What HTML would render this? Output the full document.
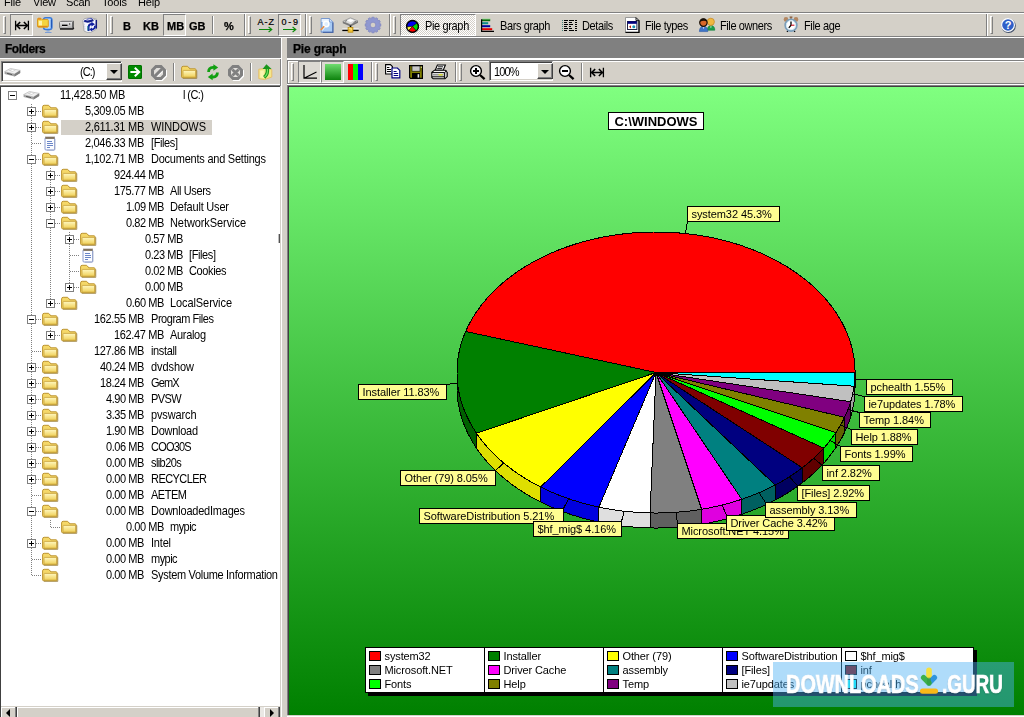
<!DOCTYPE html><html><head><meta charset="utf-8"><title>TreeSize</title><style>
html,body{margin:0;padding:0}
body{width:1024px;height:717px;overflow:hidden;background:#d4d0c8;position:relative;font-family:"Liberation Sans",sans-serif;font-size:11px;color:#000}
body>div,body>span,body>svg{position:absolute}
.t{line-height:13px;white-space:pre;font-size:11px;will-change:transform}
.b{font-weight:bold;-webkit-text-stroke:.25px #000}
.ty{transform:scaleY(1.12);transform-origin:0 10.3px}
.m{letter-spacing:-.2px}
.ic{display:block;overflow:visible}
.grip{width:3px;box-sizing:border-box;border-left:1px solid #fff;border-top:1px solid #fff;border-right:1px solid #808080;border-bottom:1px solid #808080}
.down{border:1px solid;border-color:#808080 #fff #fff #808080;background:repeating-conic-gradient(#fff 0% 25%,#d4d0c8 0% 50%) 0 0/2px 2px}
.flat{background:#dcd9d2}
.sunk{border:1px solid;border-color:#808080 #fff #fff #808080;box-shadow:inset 1px 1px 0 #404040,inset -1px -1px 0 #d4d0c8}
.btn{background:#d4d0c8;border:1px solid;border-color:#fff #404040 #404040 #fff;box-shadow:inset -1px -1px 0 #808080}
.arr{width:0;height:0;border:4px solid transparent;border-top:4px solid #000;border-bottom:0}
.arl{width:0;height:0;border:4px solid transparent;border-right:4px solid #000;border-left:0}
.arr2{width:0;height:0;border:4px solid transparent;border-left:4px solid #000;border-right:0}
.vd{width:1px;background:repeating-linear-gradient(#808080 0 1px,transparent 1px 2px)}
.hd{height:1px;background:repeating-linear-gradient(90deg,#808080 0 1px,transparent 1px 2px)}
.ex{width:7px;height:7px;border:1px solid #808080;background:#fff}
.ex i{position:absolute;left:1px;top:3px;width:5px;height:1px;background:#000}
.ex b{position:absolute;left:3px;top:1px;width:1px;height:5px;background:#000}
.wm{will-change:transform;font-weight:bold;font-size:25.5px;line-height:28px;color:#fff;-webkit-text-stroke:.7px #fff;transform-origin:0 0;transform:scaleX(.78);white-space:pre;text-shadow:0 1px 2px rgba(0,0,0,.25)}
</style></head><body>
<span class="t m" style="left:4px;top:-4px;">File</span>
<span class="t m" style="left:33px;top:-4px;">View</span>
<span class="t m" style="left:66px;top:-4px;">Scan</span>
<span class="t m" style="left:102px;top:-4px;">Tools</span>
<span class="t m" style="left:138px;top:-4px;">Help</span>
<div style="left:0px;top:12px;width:1024px;height:1px;background:#808080;"></div>
<div style="left:0px;top:13px;width:1024px;height:1px;background:#fff;"></div>
<div style="left:0px;top:36px;width:1024px;height:1px;background:#808080;"></div>
<div style="left:0px;top:37px;width:1024px;height:1px;background:#fff;"></div>
<div style="left:106px;top:14px;width:1px;height:22px;background:#808080;"></div>
<div style="left:107px;top:14px;width:1px;height:22px;background:#fff;"></div>
<div style="left:244px;top:14px;width:1px;height:22px;background:#808080;"></div>
<div style="left:245px;top:14px;width:1px;height:22px;background:#fff;"></div>
<div style="left:305px;top:14px;width:1px;height:22px;background:#808080;"></div>
<div style="left:306px;top:14px;width:1px;height:22px;background:#fff;"></div>
<div style="left:389px;top:14px;width:1px;height:22px;background:#808080;"></div>
<div style="left:390px;top:14px;width:1px;height:22px;background:#fff;"></div>
<div style="left:986px;top:14px;width:1px;height:22px;background:#808080;"></div>
<div style="left:987px;top:14px;width:1px;height:22px;background:#fff;"></div>
<div class="grip" style="left:3px;top:16px;height:18px"></div>
<div class="grip" style="left:110px;top:16px;height:18px"></div>
<div class="grip" style="left:248px;top:16px;height:18px"></div>
<div class="grip" style="left:309px;top:16px;height:18px"></div>
<div class="grip" style="left:393px;top:16px;height:18px"></div>
<div class="grip" style="left:990px;top:16px;height:18px"></div>
<div class="down flat" style="left:10px;top:14px;width:21px;height:20px"></div>
<svg class="ic" style="left:15px;top:21px" width="15" height="10" viewBox="0 0 15 10"><g stroke="#000" stroke-width="1.3" fill="none" stroke-linecap="square"><path d="M0.6,0.5V8.5M13.4,0.5V8.5M1.5,4.5H12.5"/><path d="M4.6,1.6L1.7,4.5L4.6,7.4M9.4,1.6L12.3,4.5L9.4,7.4" stroke-width="1.5"/></g></svg>
<svg class="ic" style="left:37px;top:17px" width="16" height="17" viewBox="0 0 16 17"><rect x="6.500" y="0.800" width="8.400" height="11.600" rx="2.200" fill="#b4d8ff" stroke="#3a7ada" stroke-width="1.500"/><path d="M14.300,2.400v8.400" stroke="#1c50b0" stroke-width="1.100"/><path d="M9.500,13.200h3v1.300h-3z" fill="#6a9ae0" opacity=".8"/><path d="M8,15h6.500v1h-6.500z" fill="#5a8ad8" opacity=".7"/><path d="M0.500,2.200q0-1,1-1h2.200l1,1.200h5.600q1,0 1,1v5.800q0,1-1,1h-8.800q-1,0-1-1z" fill="#f4d440" stroke="#dc9a1c" stroke-width="1"/><path d="M1,1.400h3v1.200h-3z" fill="#ea7a18"/><path d="M1,9.400h9.500" stroke="#e08a18" stroke-width="1.200"/><path d="M1.800,3.800h3.200v4.600h-3.200z" fill="#fff8c0" opacity=".85"/></svg>
<svg class="ic" style="left:59px;top:20px" width="16" height="11" viewBox="0 0 16 11"><defs><linearGradient id="dg" x1="0" y1="0" x2="0" y2="1"><stop offset="0" stop-color="#ececec"/><stop offset=".45" stop-color="#cfcfcf"/><stop offset="1" stop-color="#a8a8a8"/></linearGradient></defs><path d="M1.500,1.800L2.800,0.600h11.400l-1,1.200z" fill="#b0b0b0"/><rect x="0.500" y="1.500" width="13" height="7" rx="1" fill="url(#dg)" stroke="#808080"/><path d="M13.600,1.800l1.200-1.200v6.600l-1.200,1.400z" fill="#484848"/><path d="M1,9h12.800l1-1.200" stroke="#181818" stroke-width="1.400" fill="none"/><path d="M3,5.400h5.500" stroke="#000" stroke-width="1.500"/><path d="M3,6.500h5.500" stroke="#f0f0f0" stroke-width=".7"/><rect x="10" y="3.400" width="1.200" height="1.200" fill="#303030"/></svg>
<svg class="ic" style="left:82px;top:17px" width="16" height="16" viewBox="0 0 16 16"><path d="M0.800,3.600L2,14q2.800,2 6.600,1.400l5.200-2.800L14.600,2.400L9,0.600L2.400,1.600z" fill="#f6f7ff" stroke="#a4a4a4" stroke-width=".9"/><path d="M2.200,3.600q3.400,2.200 9.200-.6" stroke="#14208c" stroke-width="2.200" fill="none"/><path d="M4.600,2.400q2.400-.9 5.600-.9" stroke="#5058b8" stroke-width="1" fill="none"/><path d="M11.600,2.800L14.400,1.800" stroke="#b4b4b4" stroke-width="1"/><path d="M14.300,3V11.600" stroke="#10187c" stroke-width="1.500"/><path d="M2,5.400l1,8.200" stroke="#c4c8d4" stroke-width="1.400" stroke-dasharray="1 1"/><path d="M6.600,14V9.800q.2-2.800 3.400-2.800" stroke="#1020a0" stroke-width="1.900" fill="none"/><path d="M9.400,4.800l3.600,2.400l-3.600,2.200z" fill="#1020a0"/><path d="M13,8.600q.2,3.600-3.600,4" stroke="#1020a0" stroke-width="1.800" fill="none"/><path d="M10,10.400l-2.800,2.200l3,2z" fill="#1020a0"/><path d="M5.800,9v4.600" stroke="#289090" stroke-width=".9"/></svg>
<span class="t b" style="left:123px;top:19.6px;">B</span>
<span class="t b" style="left:142.5px;top:19.6px;">KB</span>
<div class="down flat" style="left:163px;top:14px;width:21px;height:20px"></div>
<span class="t b" style="left:167px;top:19.6px;">MB</span>
<span class="t b" style="left:189px;top:19.6px;">GB</span>
<div style="left:212px;top:16px;width:1px;height:18px;background:#808080;"></div>
<div style="left:213px;top:16px;width:1px;height:18px;background:#fff;"></div>
<span class="t b" style="left:224px;top:19.6px;">%</span>
<svg class="ic" style="left:257px;top:18px" width="18" height="14" viewBox="0 0 18 14"><text x="0.500" y="6.800" font-family="Liberation Sans, sans-serif" font-size="9" textLength="16.500" lengthAdjust="spacing" stroke="#000" stroke-width=".2">A-Z</text><path d="M2,11.500H14.500M11.600,9L14.800,11.500L11.600,14" stroke="#0a8a0a" stroke-width="1.100" fill="none"/></svg>
<div class="down flat" style="left:278px;top:14px;width:21px;height:20px"></div>
<svg class="ic" style="left:281px;top:18px" width="18" height="14" viewBox="0 0 18 14"><text x="0.500" y="6.800" font-family="Liberation Sans, sans-serif" font-size="9" textLength="16.500" lengthAdjust="spacing" stroke="#000" stroke-width=".2">0-9</text><path d="M2,11.500H14.500M11.600,9L14.800,11.500L11.600,14" stroke="#0a8a0a" stroke-width="1.100" fill="none"/></svg>
<svg class="ic" style="left:320px;top:18px" width="14" height="15" viewBox="0 0 14 15"><path d="M1.2,0.6h8.2l3.4,3.2v10.4h-11.6z" fill="#a9cbf4" stroke="#6a8cc8" stroke-width=".9"/><path d="M12.9,4.4v10h-10" stroke="#4a68a8" stroke-width="1.2" fill="none"/><path d="M1.6,1h7.6v3h-7.6z" fill="#e8f2ff"/><path d="M9.4,0.8v3.2h3.2" fill="#d0e2fa" stroke="#6a8cc8" stroke-width=".7"/><circle cx="6.2" cy="6" r="2.7" fill="#dfeeff" stroke="#fff" stroke-width="1.5"/><path d="M4.2,8.2L0.8,12" stroke="#e89048" stroke-width="1.7"/><path d="M5,9.2L2.2,12.6" stroke="#fff" stroke-width=".8"/></svg>
<svg class="ic" style="left:342px;top:17px" width="17" height="16" viewBox="0 0 17 16"><path d="M0.800,4.400L8.400,0.800L16,4L8.600,7.800z" fill="#dcdcdc" stroke="#9a9a9a" stroke-width=".9"/><path d="M0.800,4.400L8.600,7.800L16,4V5.800L8.600,9.600L0.800,6.200z" fill="#787878"/><path d="M5,3.600l3.200-1.700l3.800,1.400l-3.200,1.900z" fill="#fff"/><path d="M3,4.400l2-.9M11.500,5.500l2.500-1.300" stroke="#606060" stroke-width=".8"/><path d="M8.500,8.600V11" stroke="#000" stroke-width="1.600"/><path d="M0.300,12.200H16.700" stroke="#fff" stroke-width="1.400"/><path d="M0.300,13.400H16.700" stroke="#000" stroke-width="1.400"/><rect x="6.100" y="10.400" width="4.800" height="4.800" fill="#f0c030" stroke="#b88a10" stroke-width=".8"/><path d="M6.800,11.200h2.400v2" stroke="#fff2a0" stroke-width=".9" fill="none"/></svg>
<svg class="ic" style="left:365px;top:17px" width="16" height="16" viewBox="0 0 16 16"><path d="M15.81,6.82 L15.81,9.18 L14.39,9.17 L14.12,10.18 L15.36,10.88 L14.17,12.93 L12.95,12.21 L12.21,12.95 L12.93,14.17 L10.88,15.36 L10.18,14.12 L9.18,14.39 L9.18,15.81 L6.82,15.81 L6.83,14.39 L5.82,14.12 L5.12,15.36 L3.07,14.17 L3.79,12.95 L3.05,12.21 L1.83,12.93 L0.64,10.88 L1.88,10.18 L1.61,9.18 L0.19,9.18 L0.19,6.82 L1.61,6.83 L1.88,5.82 L0.64,5.12 L1.83,3.07 L3.05,3.79 L3.79,3.05 L3.07,1.83 L5.12,0.64 L5.82,1.88 L6.82,1.61 L6.82,0.19 L9.18,0.19 L9.17,1.61 L10.18,1.88 L10.88,0.64 L12.93,1.83 L12.21,3.05 L12.95,3.79 L14.17,3.07 L15.36,5.12 L14.12,5.82 L14.39,6.82Z M10.8,8 A2.800,2.800 0 1 0 5.2,8 A2.800,2.800 0 1 0 10.8,8Z" fill="#9098d0" fill-rule="evenodd" stroke="#7c84c0" stroke-width=".7" stroke-linejoin="round"/></svg>
<div class="down" style="left:400px;top:14px;width:74px;height:20px"></div>
<svg class="ic" style="left:406px;top:20px" width="13" height="13" viewBox="0 0 13 13"><path d="M6.5,6.4 L11.33,3.02 A5.9,5.9 0 0 0 0.62,6.91Z" fill="#0000f0" stroke="#000" stroke-width=".5"/><path d="M6.5,6.4 L0.62,6.91 A5.9,5.9 0 0 0 2.55,10.78Z" fill="#ffff40" stroke="#000" stroke-width=".5"/><path d="M6.5,6.4 L2.55,10.78 A5.9,5.9 0 0 0 10.45,10.78Z" fill="#ff0000" stroke="#000" stroke-width=".5"/><path d="M6.5,6.4 L10.45,10.78 A5.9,5.9 0 0 0 11.33,3.02Z" fill="#00e000" stroke="#000" stroke-width=".5"/><circle cx="6.5" cy="6.4" r="5.9" fill="none" stroke="#000" stroke-width="1.3"/></svg>
<span class="t ty" style="left:425px;top:20px;letter-spacing:-0.355px">Pie graph</span>
<svg class="ic" style="left:481px;top:19px" width="14" height="13" viewBox="0 0 14 13"><path d="M1,0.2h8.2v2H1z" fill="#0a6a0a"/><path d="M1,0h8.4" stroke="#7ee07e" stroke-width=".6"/><path d="M1,3.2h6.2v2H1z" fill="#0a8a8a"/><path d="M1,6.2h8.2v2H1z" fill="#0000a0"/><path d="M1,9.2h10.2v2H1z" fill="#e00000"/><path d="M0.6,0.2V12.4H13" stroke="#000" stroke-width="1.2" fill="none"/></svg>
<span class="t ty" style="left:500px;top:20px;letter-spacing:-0.396px">Bars graph</span>
<svg class="ic" style="left:562px;top:20px" width="16" height="12" viewBox="0 0 16 12"><g shape-rendering="crispEdges"><path d="M0,0.5h1M2,0.5h4M7,0.5h5M13,0.5h2" stroke="#000"/><path d="M0,2.5h1M2,2.5h3M7,2.5h3M13,2.5h2" stroke="#000"/><path d="M0,4.5h1M2,4.5h4M7,4.5h4M13,4.5h2" stroke="#000"/><path d="M0,6.5h1M2,6.5h3M7,6.5h2M13,6.5h2" stroke="#000"/><path d="M0,8.5h1M2,8.5h4M7,8.5h3M13,8.5h2" stroke="#000"/><path d="M0,10.5h1M2,10.5h3M7,10.5h5M13,10.5h2" stroke="#000"/><path d="M0.5,0V11" stroke="#5aa89a" stroke-dasharray="1 1" opacity=".8"/></g></svg>
<span class="t ty" style="left:582px;top:20px;letter-spacing:-0.396px">Details</span>
<svg class="ic" style="left:625px;top:17px" width="15" height="16" viewBox="0 0 15 16"><path d="M0.5,0.5h10.5l3,3v12h-13.5z" fill="#fff" stroke="#909090" stroke-width=".9"/><path d="M0.5,15.4H14V3.4" stroke="#000" stroke-width="1.3" fill="none"/><path d="M11,0.6l3,3h-3z" fill="#fff" stroke="#000" stroke-width=".9"/><rect x="2.5" y="4.5" width="9.4" height="8" fill="#fff" stroke="#202040" stroke-width="1"/><rect x="2.6" y="4.4" width="9.2" height="2.4" fill="#000080"/><path d="M6,8.2L4,9.8L6,11.4z" fill="#c02010"/><circle cx="8.8" cy="9.8" r="1.5" fill="#1890b0"/></svg>
<span class="t ty" style="left:645px;top:20px;letter-spacing:-0.425px">File types</span>
<svg class="ic" style="left:699px;top:17px" width="17" height="15" viewBox="0 0 17 15"><path d="M8.4,13.2q0-4.6 3.6-4.6t3.8,4.6z" fill="#1e9e4a" stroke="#0e7e3a" stroke-width=".6"/><circle cx="11.8" cy="4.8" r="3.6" fill="#f0b840" stroke="#c88a28" stroke-width=".8"/><path d="M11,9.4l.9,1.6l.9-1.6z" fill="#e8ffe8"/><path d="M0.4,14.6q0-5.2 4.2-5.2t4.2,5.2z" fill="#3f74c8" stroke="#2858a8" stroke-width=".6"/><circle cx="4.4" cy="5.6" r="3.7" fill="#d8682a" stroke="#181008" stroke-width="1.2"/><path d="M0.8,5q.6-3.4 3.6-3.4t3.6,3.2q-3-2.2-7.200,.2z" fill="#181008"/><path d="M3.6,10.2l.9,1.8l.9-1.8z" fill="#dfe9ff"/></svg>
<span class="t ty" style="left:720px;top:20px;letter-spacing:-0.400px">File owners</span>
<svg class="ic" style="left:783px;top:16px" width="16" height="17" viewBox="0 0 16 17"><circle cx="3" cy="3.4" r="2.3" fill="#b48660"/><circle cx="13" cy="3.4" r="2.3" fill="#b48660"/><path d="M6.6,0.6h2.8v1.2h-.8v1.6h-1.200v-1.600h-.8z" fill="#8a5a38"/><path d="M4,15.800L5.600,13.600M12,15.800L10.400,13.600" stroke="#000" stroke-width="1.2"/><circle cx="8" cy="9.200" r="5.800" fill="#fff" stroke="#7c9fba" stroke-width="1.800"/><circle cx="8" cy="9.200" r="4.600" fill="none" stroke="#cfe6f2" stroke-width=".8"/><path d="M8,5.600V9.200L5.800,11.800" stroke="#000" stroke-width="1.300" fill="none"/><path d="M8,9.200H11.400" stroke="#d01020" stroke-width="1.100"/></svg>
<span class="t ty" style="left:804px;top:20px;letter-spacing:-0.377px">File age</span>
<svg class="ic" style="left:1000px;top:17px" width="17" height="17" viewBox="0 0 17 17"><circle cx="8.600" cy="8.800" r="7.200" fill="#283858" opacity=".85"/><circle cx="8" cy="8" r="7" fill="#fff"/><circle cx="8" cy="8" r="5.800" fill="#2f5fc8"/><text x="8" y="12" font-family="Liberation Sans, sans-serif" font-weight="bold" font-size="11" fill="#fff" text-anchor="middle">?</text></svg>
<div style="left:0px;top:38px;width:281px;height:20px;background:#808080;"></div>
<div style="left:287px;top:38px;width:737px;height:20px;background:#808080;"></div>
<span class="t b" style="left:4.5px;top:43px;font-size:12px;letter-spacing:-0.457px">Folders</span>
<span class="t b" style="left:292.5px;top:43px;font-size:12px;letter-spacing:-0.148px">Pie graph</span>
<div style="left:0px;top:58px;width:281px;height:1px;background:#fff;"></div>
<div style="left:287px;top:58px;width:737px;height:2px;background:#fff;"></div>
<div style="left:281px;top:38px;width:1px;height:679px;background:#fff;"></div>
<div style="left:280px;top:59px;width:1px;height:27px;background:#808080;"></div>
<div style="left:0px;top:85px;width:281px;height:1px;background:#808080;"></div>
<div style="left:0px;top:84px;width:280px;height:1px;background:#fff;"></div>
<div style="left:287px;top:60px;width:737px;height:1px;background:#808080;"></div>
<div style="left:287px;top:60px;width:1px;height:24px;background:#808080;"></div>
<div style="left:288px;top:61px;width:736px;height:1px;background:#fff;"></div>
<div style="left:288px;top:61px;width:1px;height:22px;background:#fff;"></div>
<div style="left:287px;top:83px;width:737px;height:1px;background:#808080;"></div>
<div style="left:287px;top:84px;width:737px;height:1px;background:#fff;"></div>
<div class="sunk" style="left:1px;top:61px;width:119px;height:19px;background:#fff"></div>
<div class="btn" style="left:106px;top:63px;width:14px;height:15px"></div>
<div class="arr" style="left:110px;top:70px"></div>
<svg class="ic" style="left:4px;top:67.5px" width="17" height="9" viewBox="0 0 17 9"><path d="M0.600,3.600L6.400,0.500L16.200,2.400L10.600,6z" fill="#f0f0f0" stroke="#b8b8b8" stroke-width=".7"/><path d="M0.600,3.700L10.600,6L16.200,2.500V4.900L10.600,8.600L0.600,6z" fill="#a4a4a4"/><path d="M10.600,6L16.200,2.500V4.900L10.600,8.600z" fill="#7c7c7c"/><path d="M4.200,2.600l3.400-1.300l4.300,.9l-3.400,1.600z" fill="#d0d0d0"/><path d="M6.500,2.400l2-.7l2,.5l-2,.8z" fill="#fff"/><path d="M3,5.300l5,1.300" stroke="#505050" stroke-width=".9"/></svg>
<span class="t ty" style="left:80px;top:66px;letter-spacing:-0.943px">(C:)</span>
<svg class="ic" style="left:128px;top:65px" width="15" height="14" viewBox="0 0 15 14"><rect x="0" y="0" width="14" height="14" rx="1.600" fill="#008a00"/><rect x=".5" y=".5" width="13" height="13" rx="1.300" fill="none" stroke="#007000" stroke-width="1"/><path d="M2.400,7H11M6.800,2.800L11.200,7L6.800,11.200" stroke="#fff" stroke-width="2" fill="none"/></svg>
<svg class="ic" style="left:151px;top:65px" width="16" height="15" viewBox="0 0 16 15"><path d="M5,1.500H10L13.500,5V10L10,13.500H5L1.500,10V5Z" transform="translate(1,1)" fill="none" stroke="#fff" stroke-width="3"/><path d="M5,1.500H10L13.500,5V10L10,13.500H5L1.500,10V5Z" fill="#e2e0dc" stroke="#808080" stroke-width="3"/><path d="M6.300,11.300L11.300,6.300" stroke="#fff" stroke-width="1.400"/><path d="M4,11L11,4" stroke="#808080" stroke-width="3"/></svg>
<div style="left:173px;top:63px;width:1px;height:18px;background:#808080;"></div>
<div style="left:174px;top:63px;width:1px;height:18px;background:#fff;"></div>
<svg class="ic" style="left:181px;top:65px" width="17" height="14" viewBox="0 0 17 14"><defs><linearGradient id="fg" x1="0" y1="0" x2="0" y2="1"><stop offset="0" stop-color="#fff8c0"/><stop offset="1" stop-color="#f0d058"/></linearGradient></defs><path d="M1.300,13.200h13.400q.8,0 .8-.8V5.200q0-.8-.8-.8H9.200L7.600,2.600Q7,1.900 6.200,1.900H2.400Q.8,1.900 .8,3.500V12.400q0,.8 .5,.8z" fill="#8a6a1a" opacity=".6" transform="translate(.8,.7)"/><path d="M1.300,12.600h12.800q.8,0 .8-.8V4.600q0-.8-.8-.8H8.800L7.400,2Q6.800,1.300 6,1.300H2.200Q.6,1.300 .6,2.900V11.800q0,.8 .7,.8z" fill="#f5d868" stroke="#bc9430" stroke-width="1"/><path d="M2.600,5.400h11.400q.6,0 .6,.6V11.600q0,.6-.6,.6H2.600q-.6,0-.6-.6V6q0-.6 .6-.6z" fill="url(#fg)" stroke="#c8a23c" stroke-width=".8"/></svg>
<svg class="ic" style="left:207px;top:65px" width="12" height="15" viewBox="0 0 12 15"><path d="M1.600,7q0-4.400 4.400-4.600h1.400" stroke="#12a012" stroke-width="2.800" fill="none"/><path d="M6.400,-.8l4.800,3.200l-4.800,3.400z" fill="#12a012"/><path d="M10.400,7.400q0,4.400-4.400,4.600h-1.400" stroke="#12a012" stroke-width="2.800" fill="none"/><path d="M5.600,15.200l-4.800-3.200l4.800-3.400z" fill="#12a012"/></svg>
<svg class="ic" style="left:228px;top:65px" width="16" height="15" viewBox="0 0 16 15"><path d="M5,1.500H10L13.500,5V10L10,13.500H5L1.500,10V5Z" transform="translate(1,1)" fill="none" stroke="#fff" stroke-width="3"/><path d="M5,1.500H10L13.500,5V10L10,13.500H5L1.500,10V5Z" fill="#e2e0dc" stroke="#808080" stroke-width="3"/><path d="M4.400,4.400L10.600,10.600M10.600,4.400L4.400,10.600" stroke="#808080" stroke-width="2.800"/></svg>
<div style="left:250px;top:63px;width:1px;height:18px;background:#808080;"></div>
<div style="left:251px;top:63px;width:1px;height:18px;background:#fff;"></div>
<svg class="ic" style="left:258px;top:64px" width="15" height="16" viewBox="0 0 15 16"><path d="M0.800,5.200L7,4.400L13.800,5.600V13L6.600,15.600L0.800,14.600z" fill="#f4e68a" stroke="#e6bc62" stroke-width=".9"/><path d="M2.200,6.800l3.600-.4v7.600l-3.600-.6z" fill="#fbf4b0"/><path d="M6.200,13.400q4.200-3.400 3-9" stroke="#1a961a" stroke-width="3.400" fill="none"/><path d="M6.600,13q3.600-3.400 2.800-8" stroke="#6ee060" stroke-width="1.200" fill="none"/><path d="M4.600,5L8.400,0.200L13.600,5z" fill="#1a961a"/></svg>
<div class="grip" style="left:291px;top:63px;height:18px"></div>
<div class="down flat" style="left:298px;top:61px;width:21px;height:20px"></div>
<svg class="ic" style="left:303px;top:65px" width="14" height="14" viewBox="0 0 14 14"><path d="M1,0V13.200H14M1.500,13L13.500,7" stroke="#000" stroke-width="1.200" fill="none"/></svg>
<div class="down flat" style="left:321px;top:61px;width:21px;height:20px"></div>
<div style="left:325px;top:64px;width:16px;height:16px;background:linear-gradient(#6fdc6f,#0d820d)"></div>
<div style="left:348px;top:64px;width:5px;height:16px;background:#f00;"></div>
<div style="left:353px;top:64px;width:5px;height:16px;background:#0f0;"></div>
<div style="left:358px;top:64px;width:5px;height:16px;background:#00f;"></div>
<div style="left:371px;top:62px;width:1px;height:20px;background:#808080;"></div>
<div style="left:372px;top:62px;width:1px;height:20px;background:#fff;"></div>
<div class="grip" style="left:375px;top:63px;height:18px"></div>
<svg class="ic" style="left:385px;top:64px" width="16" height="15" viewBox="0 0 16 15"><path d="M0.600,0.600h4.800l2,2v7.400h-6.800z" fill="#fff" stroke="#000" stroke-width="1.100"/><path d="M2,3.500h2.400M2,5.500h4M2,7.500h4" stroke="#000"/><path d="M7,4h5.400l2.400,2.400v7.400H7z" fill="#fff" stroke="#000080" stroke-width="1.200"/><path d="M8.600,7.500h3M8.600,9.500h4.600M8.600,11.500h4.600" stroke="#000080"/></svg>
<svg class="ic" style="left:409px;top:65px" width="14" height="14" viewBox="0 0 14 14"><path d="M0.600,0.600h12.800v12.800h-11.800l-1-1z" fill="#808000" stroke="#000" stroke-width="1.200"/><rect x="3" y="1" width="8" height="5.200" fill="#c8c8c8" stroke="#000" stroke-width=".6"/><rect x="3" y="8" width="8" height="5.400" fill="#000"/><rect x="8.600" y="9.200" width="1.600" height="3.400" fill="#e8e8e8"/><rect x="11.800" y="1.600" width="1" height="1.400" fill="#e0e0a0"/></svg>
<svg class="ic" style="left:431px;top:64px" width="17" height="16" viewBox="0 0 17 16"><path d="M4.200,6.200L6.400,1h8l-2.200,5.200z" fill="#fff" stroke="#000" stroke-width="1.100"/><path d="M7,2.800h5M6.200,4.600h5" stroke="#000" stroke-width=".9"/><path d="M0.800,8.400L3.400,6.200h10.800L16.200,8.400V12.600L14,14.800H2.200L.8,13.400z" fill="#f4f4f4" stroke="#000" stroke-width="1.100"/><path d="M.8,8.600H13.400L16,6.600M13.400,8.600V14.600" stroke="#000" stroke-width="1" fill="none"/><path d="M2,10.800H12.400" stroke="#909090" stroke-width="1.400"/><path d="M7.600,10.800h4" stroke="#d8e020" stroke-width="1.400"/><path d="M1,12.800H13.200" stroke="#000" stroke-width="1"/><path d="M14.400,9.200l1.200-1.200M14.400,11.200l1.200-1.200M14.400,13.200l1.200-1.200" stroke="#606060" stroke-width=".9"/></svg>
<div style="left:455px;top:62px;width:1px;height:20px;background:#808080;"></div>
<div style="left:456px;top:62px;width:1px;height:20px;background:#fff;"></div>
<div class="grip" style="left:459px;top:63px;height:18px"></div>
<svg class="ic" style="left:470px;top:65px" width="16" height="15" viewBox="0 0 16 15"><path d="M10,10L14.600,14.200" stroke="#000" stroke-width="2.300"/><circle cx="6" cy="6" r="5.400" fill="#fff" stroke="#000" stroke-width="1.400"/><path d="M3,6H9" stroke="#000" stroke-width="2"/><path d="M6,3V9" stroke="#000" stroke-width="2"/></svg>
<div class="sunk" style="left:489px;top:61px;width:62px;height:18px;background:#fff"></div>
<div class="btn" style="left:537px;top:63px;width:14px;height:14px"></div>
<div class="arr" style="left:541px;top:70px"></div>
<span class="t ty" style="left:494px;top:66px;letter-spacing:-0.880px">100%</span>
<svg class="ic" style="left:559px;top:65px" width="16" height="15" viewBox="0 0 16 15"><path d="M10,10L14.600,14.200" stroke="#000" stroke-width="2.300"/><circle cx="6" cy="6" r="5.400" fill="#fff" stroke="#000" stroke-width="1.400"/><path d="M3,6H9" stroke="#000" stroke-width="2"/></svg>
<div style="left:581px;top:63px;width:1px;height:18px;background:#808080;"></div>
<div style="left:582px;top:63px;width:1px;height:18px;background:#fff;"></div>
<svg class="ic" style="left:590px;top:68px" width="15" height="10" viewBox="0 0 15 10"><g stroke="#000" stroke-width="1.3" fill="none" stroke-linecap="square"><path d="M0.6,0.5V8.5M13.4,0.5V8.5M1.5,4.5H12.5"/><path d="M4.6,1.6L1.7,4.5L4.6,7.4M9.4,1.6L12.3,4.5L9.4,7.4" stroke-width="1.5"/></g></svg>
<div style="left:0px;top:86px;width:282px;height:631px;background:#fff;"></div>
<div style="left:0px;top:86px;width:280px;height:1px;background:#404040;"></div>
<div style="left:0px;top:86px;width:1px;height:631px;background:#404040;"></div>
<div style="left:280px;top:86px;width:1px;height:631px;background:#d4d0c8;"></div>
<div class="vd" style="left:31px;top:104px;height:472px"></div>
<div class="vd" style="left:50px;top:168px;height:136px"></div>
<div class="vd" style="left:69px;top:232px;height:56px"></div>
<div class="vd" style="left:50px;top:328px;height:8px"></div>
<div class="vd" style="left:50px;top:520px;height:8px"></div>
<div style="left:61px;top:120px;width:151px;height:15px;background:#d4d0c8;"></div>
<div class="ex" style="left:8px;top:91px"><i></i></div>
<svg class="ic" style="left:23px;top:91px" width="17" height="9" viewBox="0 0 17 9"><path d="M0.600,3.600L6.400,0.500L16.200,2.400L10.600,6z" fill="#f0f0f0" stroke="#b8b8b8" stroke-width=".7"/><path d="M0.600,3.700L10.600,6L16.200,2.500V4.900L10.600,8.600L0.600,6z" fill="#a4a4a4"/><path d="M10.600,6L16.200,2.500V4.900L10.600,8.600z" fill="#7c7c7c"/><path d="M4.200,2.600l3.400-1.300l4.300,.9l-3.400,1.600z" fill="#d0d0d0"/><path d="M6.500,2.400l2-.7l2,.5l-2,.8z" fill="#fff"/><path d="M3,5.300l5,1.300" stroke="#505050" stroke-width=".9"/></svg>
<span class="t ty" style="left:59.7px;top:89px;letter-spacing:-0.217px">11,428.50 MB</span>
<div class="hd" style="left:32px;top:111px;width:10px"></div>
<div class="ex" style="left:27px;top:107px"><i></i><b></b></div>
<svg class="ic" style="left:42px;top:104px" width="17" height="14" viewBox="0 0 17 14"><defs><linearGradient id="fg" x1="0" y1="0" x2="0" y2="1"><stop offset="0" stop-color="#fff8c0"/><stop offset="1" stop-color="#f0d058"/></linearGradient></defs><path d="M1.300,13.200h13.400q.8,0 .8-.8V5.200q0-.8-.8-.8H9.200L7.600,2.600Q7,1.900 6.200,1.900H2.400Q.8,1.900 .8,3.500V12.400q0,.8 .5,.8z" fill="#8a6a1a" opacity=".6" transform="translate(.8,.7)"/><path d="M1.300,12.600h12.800q.8,0 .8-.8V4.600q0-.8-.8-.8H8.800L7.400,2Q6.800,1.300 6,1.300H2.200Q.6,1.300 .6,2.900V11.800q0,.8 .7,.8z" fill="#f5d868" stroke="#bc9430" stroke-width="1"/><path d="M2.600,5.400h11.400q.6,0 .6,.6V11.600q0,.6-.6,.6H2.600q-.6,0-.6-.6V6q0-.6 .6-.6z" fill="url(#fg)" stroke="#c8a23c" stroke-width=".8"/></svg>
<span class="t ty" style="left:85.19999999999999px;top:105px;letter-spacing:-0.307px">5,309.05 MB</span>
<div class="hd" style="left:32px;top:127px;width:10px"></div>
<div class="ex" style="left:27px;top:123px"><i></i><b></b></div>
<svg class="ic" style="left:42px;top:120px" width="17" height="14" viewBox="0 0 17 14"><defs><linearGradient id="fg" x1="0" y1="0" x2="0" y2="1"><stop offset="0" stop-color="#fff8c0"/><stop offset="1" stop-color="#f0d058"/></linearGradient></defs><path d="M1.300,13.200h13.400q.8,0 .8-.8V5.200q0-.8-.8-.8H9.200L7.600,2.600Q7,1.900 6.200,1.900H2.400Q.8,1.900 .8,3.500V12.400q0,.8 .5,.8z" fill="#8a6a1a" opacity=".6" transform="translate(.8,.7)"/><path d="M1.300,12.600h12.800q.8,0 .8-.8V4.600q0-.8-.8-.8H8.800L7.400,2Q6.800,1.300 6,1.300H2.200Q.6,1.300 .6,2.900V11.800q0,.8 .7,.8z" fill="#f5d868" stroke="#bc9430" stroke-width="1"/><path d="M2.600,5.400h11.400q.6,0 .6,.6V11.600q0,.6-.6,.6H2.600q-.6,0-.6-.6V6q0-.6 .6-.6z" fill="url(#fg)" stroke="#c8a23c" stroke-width=".8"/></svg>
<span class="t ty" style="left:85.19999999999999px;top:121px;letter-spacing:-0.226px">2,611.31 MB</span>
<span class="t ty" style="left:150.5px;top:121px;letter-spacing:-0.102px">WINDOWS</span>
<div class="hd" style="left:32px;top:143px;width:10px"></div>
<svg class="ic" style="left:44px;top:136px" width="12" height="15" viewBox="0 0 12 15"><path d="M1,2.200h9.600V13q0,1-1,1H2Q1,14 1,13z" fill="#fbfcff" stroke="#7f92c8" stroke-width=".9"/><path d="M10.900,3v10.400q0,.8-1,.8H3" stroke="#9aa6c8" stroke-width=".8" fill="none"/><path d="M1.500,1.200h9v1.600h-9z" fill="#8a7a5a"/><path d="M2,0.400v2M4,0.400v2M6,0.400v2M8,0.400v2M10,0.400v2" stroke="#5a4a3a" stroke-width=".8"/><path d="M3,5.500h5M3,7.500h6M3,9.500h6M3,11.500h3" stroke="#6a86c8" stroke-width="1"/></svg>
<span class="t ty" style="left:85.19999999999999px;top:137px;letter-spacing:-0.307px">2,046.33 MB</span>
<span class="t ty" style="left:150.5px;top:137px;letter-spacing:-0.391px">[Files]</span>
<div class="hd" style="left:32px;top:159px;width:10px"></div>
<div class="ex" style="left:27px;top:155px"><i></i></div>
<svg class="ic" style="left:42px;top:152px" width="17" height="14" viewBox="0 0 17 14"><defs><linearGradient id="fg" x1="0" y1="0" x2="0" y2="1"><stop offset="0" stop-color="#fff8c0"/><stop offset="1" stop-color="#f0d058"/></linearGradient></defs><path d="M1.300,13.200h13.400q.8,0 .8-.8V5.200q0-.8-.8-.8H9.200L7.600,2.600Q7,1.900 6.200,1.900H2.400Q.8,1.900 .8,3.500V12.400q0,.8 .5,.8z" fill="#8a6a1a" opacity=".6" transform="translate(.8,.7)"/><path d="M1.300,12.600h12.800q.8,0 .8-.8V4.600q0-.8-.8-.8H8.800L7.400,2Q6.800,1.300 6,1.300H2.200Q.6,1.300 .6,2.900V11.800q0,.8 .7,.8z" fill="#f5d868" stroke="#bc9430" stroke-width="1"/><path d="M2.600,5.400h11.400q.6,0 .6,.6V11.600q0,.6-.6,.6H2.600q-.6,0-.6-.6V6q0-.6 .6-.6z" fill="url(#fg)" stroke="#c8a23c" stroke-width=".8"/></svg>
<span class="t ty" style="left:85.19999999999999px;top:153px;letter-spacing:-0.307px">1,102.71 MB</span>
<span class="t ty" style="left:150.5px;top:153px;letter-spacing:-0.231px">Documents and Settings</span>
<div class="hd" style="left:51px;top:175px;width:10px"></div>
<div class="ex" style="left:46px;top:171px"><i></i><b></b></div>
<svg class="ic" style="left:61px;top:168px" width="17" height="14" viewBox="0 0 17 14"><defs><linearGradient id="fg" x1="0" y1="0" x2="0" y2="1"><stop offset="0" stop-color="#fff8c0"/><stop offset="1" stop-color="#f0d058"/></linearGradient></defs><path d="M1.300,13.200h13.400q.8,0 .8-.8V5.200q0-.8-.8-.8H9.200L7.600,2.600Q7,1.900 6.200,1.900H2.400Q.8,1.900 .8,3.500V12.400q0,.8 .5,.8z" fill="#8a6a1a" opacity=".6" transform="translate(.8,.7)"/><path d="M1.300,12.600h12.800q.8,0 .8-.8V4.600q0-.8-.8-.8H8.800L7.400,2Q6.800,1.300 6,1.300H2.200Q.6,1.300 .6,2.900V11.800q0,.8 .7,.8z" fill="#f5d868" stroke="#bc9430" stroke-width="1"/><path d="M2.600,5.400h11.400q.6,0 .6,.6V11.600q0,.6-.6,.6H2.600q-.6,0-.6-.6V6q0-.6 .6-.6z" fill="url(#fg)" stroke="#c8a23c" stroke-width=".8"/></svg>
<span class="t ty" style="left:113.69999999999999px;top:169px;letter-spacing:-0.363px">924.44 MB</span>
<div class="hd" style="left:51px;top:191px;width:10px"></div>
<div class="ex" style="left:46px;top:187px"><i></i><b></b></div>
<svg class="ic" style="left:61px;top:184px" width="17" height="14" viewBox="0 0 17 14"><defs><linearGradient id="fg" x1="0" y1="0" x2="0" y2="1"><stop offset="0" stop-color="#fff8c0"/><stop offset="1" stop-color="#f0d058"/></linearGradient></defs><path d="M1.300,13.200h13.400q.8,0 .8-.8V5.200q0-.8-.8-.8H9.200L7.600,2.600Q7,1.900 6.200,1.900H2.400Q.8,1.900 .8,3.500V12.400q0,.8 .5,.8z" fill="#8a6a1a" opacity=".6" transform="translate(.8,.7)"/><path d="M1.300,12.600h12.800q.8,0 .8-.8V4.600q0-.8-.8-.8H8.800L7.400,2Q6.800,1.300 6,1.300H2.200Q.6,1.300 .6,2.900V11.800q0,.8 .7,.8z" fill="#f5d868" stroke="#bc9430" stroke-width="1"/><path d="M2.600,5.400h11.400q.6,0 .6,.6V11.600q0,.6-.6,.6H2.600q-.6,0-.6-.6V6q0-.6 .6-.6z" fill="url(#fg)" stroke="#c8a23c" stroke-width=".8"/></svg>
<span class="t ty" style="left:113.69999999999999px;top:185px;letter-spacing:-0.363px">175.77 MB</span>
<span class="t ty" style="left:169.5px;top:185px;letter-spacing:-0.377px">All Users</span>
<div class="hd" style="left:51px;top:207px;width:10px"></div>
<div class="ex" style="left:46px;top:203px"><i></i><b></b></div>
<svg class="ic" style="left:61px;top:200px" width="17" height="14" viewBox="0 0 17 14"><defs><linearGradient id="fg" x1="0" y1="0" x2="0" y2="1"><stop offset="0" stop-color="#fff8c0"/><stop offset="1" stop-color="#f0d058"/></linearGradient></defs><path d="M1.300,13.200h13.400q.8,0 .8-.8V5.200q0-.8-.8-.8H9.200L7.600,2.600Q7,1.900 6.200,1.900H2.400Q.8,1.900 .8,3.500V12.400q0,.8 .5,.8z" fill="#8a6a1a" opacity=".6" transform="translate(.8,.7)"/><path d="M1.300,12.600h12.800q.8,0 .8-.8V4.600q0-.8-.8-.8H8.800L7.400,2Q6.800,1.300 6,1.300H2.200Q.6,1.300 .6,2.900V11.800q0,.8 .7,.8z" fill="#f5d868" stroke="#bc9430" stroke-width="1"/><path d="M2.600,5.400h11.400q.6,0 .6,.6V11.600q0,.6-.6,.6H2.600q-.6,0-.6-.6V6q0-.6 .6-.6z" fill="url(#fg)" stroke="#c8a23c" stroke-width=".8"/></svg>
<span class="t ty" style="left:125.69999999999999px;top:201px;letter-spacing:-0.445px">1.09 MB</span>
<span class="t ty" style="left:169.5px;top:201px;letter-spacing:-0.195px">Default User</span>
<div class="hd" style="left:51px;top:223px;width:10px"></div>
<div class="ex" style="left:46px;top:219px"><i></i></div>
<svg class="ic" style="left:61px;top:216px" width="17" height="14" viewBox="0 0 17 14"><defs><linearGradient id="fg" x1="0" y1="0" x2="0" y2="1"><stop offset="0" stop-color="#fff8c0"/><stop offset="1" stop-color="#f0d058"/></linearGradient></defs><path d="M1.300,13.200h13.400q.8,0 .8-.8V5.200q0-.8-.8-.8H9.200L7.600,2.600Q7,1.900 6.200,1.900H2.400Q.8,1.900 .8,3.500V12.400q0,.8 .5,.8z" fill="#8a6a1a" opacity=".6" transform="translate(.8,.7)"/><path d="M1.300,12.600h12.800q.8,0 .8-.8V4.600q0-.8-.8-.8H8.800L7.400,2Q6.800,1.300 6,1.300H2.200Q.6,1.300 .6,2.900V11.800q0,.8 .7,.8z" fill="#f5d868" stroke="#bc9430" stroke-width="1"/><path d="M2.600,5.400h11.400q.6,0 .6,.6V11.600q0,.6-.6,.6H2.600q-.6,0-.6-.6V6q0-.6 .6-.6z" fill="url(#fg)" stroke="#c8a23c" stroke-width=".8"/></svg>
<span class="t ty" style="left:125.69999999999999px;top:217px;letter-spacing:-0.445px">0.82 MB</span>
<span class="t ty" style="left:169.5px;top:217px;letter-spacing:-0.079px">NetworkService</span>
<div class="hd" style="left:70px;top:239px;width:10px"></div>
<div class="ex" style="left:65px;top:235px"><i></i><b></b></div>
<svg class="ic" style="left:80px;top:232px" width="17" height="14" viewBox="0 0 17 14"><defs><linearGradient id="fg" x1="0" y1="0" x2="0" y2="1"><stop offset="0" stop-color="#fff8c0"/><stop offset="1" stop-color="#f0d058"/></linearGradient></defs><path d="M1.300,13.200h13.400q.8,0 .8-.8V5.200q0-.8-.8-.8H9.200L7.600,2.600Q7,1.900 6.200,1.900H2.400Q.8,1.900 .8,3.500V12.400q0,.8 .5,.8z" fill="#8a6a1a" opacity=".6" transform="translate(.8,.7)"/><path d="M1.300,12.600h12.800q.8,0 .8-.8V4.600q0-.8-.8-.8H8.800L7.400,2Q6.800,1.300 6,1.300H2.200Q.6,1.300 .6,2.900V11.800q0,.8 .7,.8z" fill="#f5d868" stroke="#bc9430" stroke-width="1"/><path d="M2.600,5.400h11.400q.6,0 .6,.6V11.600q0,.6-.6,.6H2.600q-.6,0-.6-.6V6q0-.6 .6-.6z" fill="url(#fg)" stroke="#c8a23c" stroke-width=".8"/></svg>
<span class="t ty" style="left:144.7px;top:233px;letter-spacing:-0.445px">0.57 MB</span>
<div class="hd" style="left:70px;top:255px;width:10px"></div>
<svg class="ic" style="left:82px;top:248px" width="12" height="15" viewBox="0 0 12 15"><path d="M1,2.200h9.600V13q0,1-1,1H2Q1,14 1,13z" fill="#fbfcff" stroke="#7f92c8" stroke-width=".9"/><path d="M10.900,3v10.400q0,.8-1,.8H3" stroke="#9aa6c8" stroke-width=".8" fill="none"/><path d="M1.500,1.200h9v1.600h-9z" fill="#8a7a5a"/><path d="M2,0.400v2M4,0.400v2M6,0.400v2M8,0.400v2M10,0.400v2" stroke="#5a4a3a" stroke-width=".8"/><path d="M3,5.500h5M3,7.500h6M3,9.500h6M3,11.500h3" stroke="#6a86c8" stroke-width="1"/></svg>
<span class="t ty" style="left:144.7px;top:249px;letter-spacing:-0.445px">0.23 MB</span>
<span class="t ty" style="left:188.5px;top:249px;letter-spacing:-0.391px">[Files]</span>
<div class="hd" style="left:70px;top:271px;width:10px"></div>
<svg class="ic" style="left:80px;top:264px" width="17" height="14" viewBox="0 0 17 14"><defs><linearGradient id="fg" x1="0" y1="0" x2="0" y2="1"><stop offset="0" stop-color="#fff8c0"/><stop offset="1" stop-color="#f0d058"/></linearGradient></defs><path d="M1.300,13.200h13.400q.8,0 .8-.8V5.200q0-.8-.8-.8H9.200L7.600,2.600Q7,1.900 6.200,1.900H2.400Q.8,1.900 .8,3.500V12.400q0,.8 .5,.8z" fill="#8a6a1a" opacity=".6" transform="translate(.8,.7)"/><path d="M1.300,12.600h12.800q.8,0 .8-.8V4.600q0-.8-.8-.8H8.800L7.400,2Q6.800,1.300 6,1.300H2.200Q.6,1.300 .6,2.900V11.800q0,.8 .7,.8z" fill="#f5d868" stroke="#bc9430" stroke-width="1"/><path d="M2.600,5.400h11.400q.6,0 .6,.6V11.600q0,.6-.6,.6H2.600q-.6,0-.6-.6V6q0-.6 .6-.6z" fill="url(#fg)" stroke="#c8a23c" stroke-width=".8"/></svg>
<span class="t ty" style="left:144.7px;top:265px;letter-spacing:-0.445px">0.02 MB</span>
<span class="t ty" style="left:188.5px;top:265px;letter-spacing:-0.358px">Cookies</span>
<div class="hd" style="left:70px;top:287px;width:10px"></div>
<div class="ex" style="left:65px;top:283px"><i></i><b></b></div>
<svg class="ic" style="left:80px;top:280px" width="17" height="14" viewBox="0 0 17 14"><defs><linearGradient id="fg" x1="0" y1="0" x2="0" y2="1"><stop offset="0" stop-color="#fff8c0"/><stop offset="1" stop-color="#f0d058"/></linearGradient></defs><path d="M1.300,13.200h13.400q.8,0 .8-.8V5.200q0-.8-.8-.8H9.200L7.600,2.600Q7,1.900 6.200,1.900H2.400Q.8,1.900 .8,3.500V12.400q0,.8 .5,.8z" fill="#8a6a1a" opacity=".6" transform="translate(.8,.7)"/><path d="M1.300,12.600h12.800q.8,0 .8-.8V4.600q0-.8-.8-.8H8.800L7.400,2Q6.800,1.300 6,1.300H2.200Q.6,1.300 .6,2.900V11.800q0,.8 .7,.8z" fill="#f5d868" stroke="#bc9430" stroke-width="1"/><path d="M2.600,5.400h11.400q.6,0 .6,.6V11.600q0,.6-.6,.6H2.600q-.6,0-.6-.6V6q0-.6 .6-.6z" fill="url(#fg)" stroke="#c8a23c" stroke-width=".8"/></svg>
<span class="t ty" style="left:144.7px;top:281px;letter-spacing:-0.445px">0.00 MB</span>
<div class="hd" style="left:51px;top:303px;width:10px"></div>
<div class="ex" style="left:46px;top:299px"><i></i><b></b></div>
<svg class="ic" style="left:61px;top:296px" width="17" height="14" viewBox="0 0 17 14"><defs><linearGradient id="fg" x1="0" y1="0" x2="0" y2="1"><stop offset="0" stop-color="#fff8c0"/><stop offset="1" stop-color="#f0d058"/></linearGradient></defs><path d="M1.300,13.200h13.400q.8,0 .8-.8V5.200q0-.8-.8-.8H9.200L7.600,2.600Q7,1.900 6.200,1.900H2.400Q.8,1.900 .8,3.500V12.400q0,.8 .5,.8z" fill="#8a6a1a" opacity=".6" transform="translate(.8,.7)"/><path d="M1.300,12.600h12.800q.8,0 .8-.8V4.600q0-.8-.8-.8H8.800L7.400,2Q6.800,1.300 6,1.300H2.200Q.6,1.300 .6,2.900V11.800q0,.8 .7,.8z" fill="#f5d868" stroke="#bc9430" stroke-width="1"/><path d="M2.600,5.400h11.400q.6,0 .6,.6V11.600q0,.6-.6,.6H2.600q-.6,0-.6-.6V6q0-.6 .6-.6z" fill="url(#fg)" stroke="#c8a23c" stroke-width=".8"/></svg>
<span class="t ty" style="left:125.69999999999999px;top:297px;letter-spacing:-0.445px">0.60 MB</span>
<span class="t ty" style="left:169.5px;top:297px;letter-spacing:-0.089px">LocalService</span>
<div class="hd" style="left:32px;top:319px;width:10px"></div>
<div class="ex" style="left:27px;top:315px"><i></i></div>
<svg class="ic" style="left:42px;top:312px" width="17" height="14" viewBox="0 0 17 14"><defs><linearGradient id="fg" x1="0" y1="0" x2="0" y2="1"><stop offset="0" stop-color="#fff8c0"/><stop offset="1" stop-color="#f0d058"/></linearGradient></defs><path d="M1.300,13.200h13.400q.8,0 .8-.8V5.200q0-.8-.8-.8H9.200L7.600,2.600Q7,1.900 6.200,1.900H2.400Q.8,1.900 .8,3.500V12.400q0,.8 .5,.8z" fill="#8a6a1a" opacity=".6" transform="translate(.8,.7)"/><path d="M1.300,12.600h12.800q.8,0 .8-.8V4.600q0-.8-.8-.8H8.800L7.400,2Q6.800,1.300 6,1.300H2.200Q.6,1.300 .6,2.900V11.800q0,.8 .7,.8z" fill="#f5d868" stroke="#bc9430" stroke-width="1"/><path d="M2.600,5.400h11.400q.6,0 .6,.6V11.600q0,.6-.6,.6H2.600q-.6,0-.6-.6V6q0-.6 .6-.6z" fill="url(#fg)" stroke="#c8a23c" stroke-width=".8"/></svg>
<span class="t ty" style="left:94.19999999999999px;top:313px;letter-spacing:-0.363px">162.55 MB</span>
<span class="t ty" style="left:150.5px;top:313px;letter-spacing:-0.456px">Program Files</span>
<div class="hd" style="left:51px;top:335px;width:10px"></div>
<div class="ex" style="left:46px;top:331px"><i></i><b></b></div>
<svg class="ic" style="left:61px;top:328px" width="17" height="14" viewBox="0 0 17 14"><defs><linearGradient id="fg" x1="0" y1="0" x2="0" y2="1"><stop offset="0" stop-color="#fff8c0"/><stop offset="1" stop-color="#f0d058"/></linearGradient></defs><path d="M1.300,13.200h13.400q.8,0 .8-.8V5.200q0-.8-.8-.8H9.200L7.600,2.600Q7,1.900 6.200,1.900H2.400Q.8,1.900 .8,3.500V12.400q0,.8 .5,.8z" fill="#8a6a1a" opacity=".6" transform="translate(.8,.7)"/><path d="M1.300,12.600h12.800q.8,0 .8-.8V4.600q0-.8-.8-.8H8.800L7.400,2Q6.800,1.300 6,1.300H2.200Q.6,1.300 .6,2.900V11.800q0,.8 .7,.8z" fill="#f5d868" stroke="#bc9430" stroke-width="1"/><path d="M2.600,5.400h11.400q.6,0 .6,.6V11.600q0,.6-.6,.6H2.600q-.6,0-.6-.6V6q0-.6 .6-.6z" fill="url(#fg)" stroke="#c8a23c" stroke-width=".8"/></svg>
<span class="t ty" style="left:113.69999999999999px;top:329px;letter-spacing:-0.363px">162.47 MB</span>
<span class="t ty" style="left:169.5px;top:329px;letter-spacing:-0.320px">Auralog</span>
<div class="hd" style="left:32px;top:351px;width:10px"></div>
<svg class="ic" style="left:42px;top:344px" width="17" height="14" viewBox="0 0 17 14"><defs><linearGradient id="fg" x1="0" y1="0" x2="0" y2="1"><stop offset="0" stop-color="#fff8c0"/><stop offset="1" stop-color="#f0d058"/></linearGradient></defs><path d="M1.300,13.200h13.400q.8,0 .8-.8V5.200q0-.8-.8-.8H9.200L7.600,2.600Q7,1.900 6.200,1.900H2.400Q.8,1.900 .8,3.500V12.400q0,.8 .5,.8z" fill="#8a6a1a" opacity=".6" transform="translate(.8,.7)"/><path d="M1.300,12.600h12.800q.8,0 .8-.8V4.600q0-.8-.8-.8H8.800L7.400,2Q6.800,1.300 6,1.300H2.200Q.6,1.300 .6,2.900V11.800q0,.8 .7,.8z" fill="#f5d868" stroke="#bc9430" stroke-width="1"/><path d="M2.600,5.400h11.400q.6,0 .6,.6V11.600q0,.6-.6,.6H2.600q-.6,0-.6-.6V6q0-.6 .6-.6z" fill="url(#fg)" stroke="#c8a23c" stroke-width=".8"/></svg>
<span class="t ty" style="left:94.19999999999999px;top:345px;letter-spacing:-0.363px">127.86 MB</span>
<span class="t ty" style="left:150.5px;top:345px;letter-spacing:-0.354px">install</span>
<div class="hd" style="left:32px;top:367px;width:10px"></div>
<div class="ex" style="left:27px;top:363px"><i></i><b></b></div>
<svg class="ic" style="left:42px;top:360px" width="17" height="14" viewBox="0 0 17 14"><defs><linearGradient id="fg" x1="0" y1="0" x2="0" y2="1"><stop offset="0" stop-color="#fff8c0"/><stop offset="1" stop-color="#f0d058"/></linearGradient></defs><path d="M1.300,13.200h13.400q.8,0 .8-.8V5.200q0-.8-.8-.8H9.200L7.600,2.600Q7,1.900 6.200,1.900H2.400Q.8,1.900 .8,3.500V12.400q0,.8 .5,.8z" fill="#8a6a1a" opacity=".6" transform="translate(.8,.7)"/><path d="M1.300,12.600h12.800q.8,0 .8-.8V4.600q0-.8-.8-.8H8.800L7.400,2Q6.800,1.300 6,1.300H2.200Q.6,1.300 .6,2.900V11.800q0,.8 .7,.8z" fill="#f5d868" stroke="#bc9430" stroke-width="1"/><path d="M2.600,5.400h11.400q.6,0 .6,.6V11.600q0,.6-.6,.6H2.600q-.6,0-.6-.6V6q0-.6 .6-.6z" fill="url(#fg)" stroke="#c8a23c" stroke-width=".8"/></svg>
<span class="t ty" style="left:100.19999999999999px;top:361px;letter-spacing:-0.399px">40.24 MB</span>
<span class="t ty" style="left:150.5px;top:361px;letter-spacing:-0.070px">dvdshow</span>
<div class="hd" style="left:32px;top:383px;width:10px"></div>
<div class="ex" style="left:27px;top:379px"><i></i><b></b></div>
<svg class="ic" style="left:42px;top:376px" width="17" height="14" viewBox="0 0 17 14"><defs><linearGradient id="fg" x1="0" y1="0" x2="0" y2="1"><stop offset="0" stop-color="#fff8c0"/><stop offset="1" stop-color="#f0d058"/></linearGradient></defs><path d="M1.300,13.200h13.400q.8,0 .8-.8V5.200q0-.8-.8-.8H9.200L7.600,2.600Q7,1.900 6.200,1.900H2.400Q.8,1.900 .8,3.500V12.400q0,.8 .5,.8z" fill="#8a6a1a" opacity=".6" transform="translate(.8,.7)"/><path d="M1.300,12.600h12.800q.8,0 .8-.8V4.600q0-.8-.8-.8H8.800L7.400,2Q6.800,1.300 6,1.300H2.200Q.6,1.300 .6,2.900V11.800q0,.8 .7,.8z" fill="#f5d868" stroke="#bc9430" stroke-width="1"/><path d="M2.600,5.400h11.400q.6,0 .6,.6V11.600q0,.6-.6,.6H2.600q-.6,0-.6-.6V6q0-.6 .6-.6z" fill="url(#fg)" stroke="#c8a23c" stroke-width=".8"/></svg>
<span class="t ty" style="left:100.19999999999999px;top:377px;letter-spacing:-0.399px">18.24 MB</span>
<span class="t ty" style="left:150.5px;top:377px;letter-spacing:-0.896px">GemX</span>
<div class="hd" style="left:32px;top:399px;width:10px"></div>
<div class="ex" style="left:27px;top:395px"><i></i><b></b></div>
<svg class="ic" style="left:42px;top:392px" width="17" height="14" viewBox="0 0 17 14"><defs><linearGradient id="fg" x1="0" y1="0" x2="0" y2="1"><stop offset="0" stop-color="#fff8c0"/><stop offset="1" stop-color="#f0d058"/></linearGradient></defs><path d="M1.300,13.200h13.400q.8,0 .8-.8V5.200q0-.8-.8-.8H9.200L7.600,2.600Q7,1.900 6.200,1.900H2.400Q.8,1.900 .8,3.500V12.400q0,.8 .5,.8z" fill="#8a6a1a" opacity=".6" transform="translate(.8,.7)"/><path d="M1.300,12.600h12.800q.8,0 .8-.8V4.600q0-.8-.8-.8H8.800L7.400,2Q6.800,1.300 6,1.300H2.200Q.6,1.300 .6,2.900V11.800q0,.8 .7,.8z" fill="#f5d868" stroke="#bc9430" stroke-width="1"/><path d="M2.600,5.400h11.400q.6,0 .6,.6V11.600q0,.6-.6,.6H2.600q-.6,0-.6-.6V6q0-.6 .6-.6z" fill="url(#fg)" stroke="#c8a23c" stroke-width=".8"/></svg>
<span class="t ty" style="left:106.19999999999999px;top:393px;letter-spacing:-0.445px">4.90 MB</span>
<span class="t ty" style="left:150.5px;top:393px;letter-spacing:-0.569px">PVSW</span>
<div class="hd" style="left:32px;top:415px;width:10px"></div>
<div class="ex" style="left:27px;top:411px"><i></i><b></b></div>
<svg class="ic" style="left:42px;top:408px" width="17" height="14" viewBox="0 0 17 14"><defs><linearGradient id="fg" x1="0" y1="0" x2="0" y2="1"><stop offset="0" stop-color="#fff8c0"/><stop offset="1" stop-color="#f0d058"/></linearGradient></defs><path d="M1.300,13.200h13.400q.8,0 .8-.8V5.200q0-.8-.8-.8H9.200L7.600,2.600Q7,1.900 6.200,1.900H2.400Q.8,1.900 .8,3.500V12.400q0,.8 .5,.8z" fill="#8a6a1a" opacity=".6" transform="translate(.8,.7)"/><path d="M1.300,12.600h12.800q.8,0 .8-.8V4.600q0-.8-.8-.8H8.800L7.400,2Q6.800,1.300 6,1.300H2.200Q.6,1.300 .6,2.900V11.800q0,.8 .7,.8z" fill="#f5d868" stroke="#bc9430" stroke-width="1"/><path d="M2.600,5.400h11.400q.6,0 .6,.6V11.600q0,.6-.6,.6H2.600q-.6,0-.6-.6V6q0-.6 .6-.6z" fill="url(#fg)" stroke="#c8a23c" stroke-width=".8"/></svg>
<span class="t ty" style="left:106.19999999999999px;top:409px;letter-spacing:-0.445px">3.35 MB</span>
<span class="t ty" style="left:150.5px;top:409px;letter-spacing:-0.138px">pvswarch</span>
<div class="hd" style="left:32px;top:431px;width:10px"></div>
<div class="ex" style="left:27px;top:427px"><i></i><b></b></div>
<svg class="ic" style="left:42px;top:424px" width="17" height="14" viewBox="0 0 17 14"><defs><linearGradient id="fg" x1="0" y1="0" x2="0" y2="1"><stop offset="0" stop-color="#fff8c0"/><stop offset="1" stop-color="#f0d058"/></linearGradient></defs><path d="M1.300,13.200h13.400q.8,0 .8-.8V5.200q0-.8-.8-.8H9.200L7.600,2.600Q7,1.900 6.200,1.900H2.400Q.8,1.900 .8,3.500V12.400q0,.8 .5,.8z" fill="#8a6a1a" opacity=".6" transform="translate(.8,.7)"/><path d="M1.300,12.600h12.800q.8,0 .8-.8V4.600q0-.8-.8-.8H8.800L7.400,2Q6.800,1.300 6,1.300H2.200Q.6,1.300 .6,2.900V11.800q0,.8 .7,.8z" fill="#f5d868" stroke="#bc9430" stroke-width="1"/><path d="M2.600,5.400h11.400q.6,0 .6,.6V11.600q0,.6-.6,.6H2.600q-.6,0-.6-.6V6q0-.6 .6-.6z" fill="url(#fg)" stroke="#c8a23c" stroke-width=".8"/></svg>
<span class="t ty" style="left:106.19999999999999px;top:425px;letter-spacing:-0.445px">1.90 MB</span>
<span class="t ty" style="left:150.5px;top:425px;letter-spacing:-0.275px">Download</span>
<div class="hd" style="left:32px;top:447px;width:10px"></div>
<div class="ex" style="left:27px;top:443px"><i></i><b></b></div>
<svg class="ic" style="left:42px;top:440px" width="17" height="14" viewBox="0 0 17 14"><defs><linearGradient id="fg" x1="0" y1="0" x2="0" y2="1"><stop offset="0" stop-color="#fff8c0"/><stop offset="1" stop-color="#f0d058"/></linearGradient></defs><path d="M1.300,13.200h13.400q.8,0 .8-.8V5.200q0-.8-.8-.8H9.200L7.600,2.600Q7,1.900 6.200,1.900H2.400Q.8,1.900 .8,3.500V12.400q0,.8 .5,.8z" fill="#8a6a1a" opacity=".6" transform="translate(.8,.7)"/><path d="M1.300,12.600h12.800q.8,0 .8-.8V4.600q0-.8-.8-.8H8.800L7.400,2Q6.800,1.300 6,1.300H2.200Q.6,1.300 .6,2.900V11.800q0,.8 .7,.8z" fill="#f5d868" stroke="#bc9430" stroke-width="1"/><path d="M2.600,5.400h11.400q.6,0 .6,.6V11.600q0,.6-.6,.6H2.600q-.6,0-.6-.6V6q0-.6 .6-.6z" fill="url(#fg)" stroke="#c8a23c" stroke-width=".8"/></svg>
<span class="t ty" style="left:106.19999999999999px;top:441px;letter-spacing:-0.445px">0.06 MB</span>
<span class="t ty" style="left:150.5px;top:441px;letter-spacing:-0.808px">COO30S</span>
<div class="hd" style="left:32px;top:463px;width:10px"></div>
<div class="ex" style="left:27px;top:459px"><i></i><b></b></div>
<svg class="ic" style="left:42px;top:456px" width="17" height="14" viewBox="0 0 17 14"><defs><linearGradient id="fg" x1="0" y1="0" x2="0" y2="1"><stop offset="0" stop-color="#fff8c0"/><stop offset="1" stop-color="#f0d058"/></linearGradient></defs><path d="M1.300,13.200h13.400q.8,0 .8-.8V5.200q0-.8-.8-.8H9.200L7.600,2.600Q7,1.900 6.200,1.900H2.400Q.8,1.900 .8,3.500V12.400q0,.8 .5,.8z" fill="#8a6a1a" opacity=".6" transform="translate(.8,.7)"/><path d="M1.300,12.600h12.800q.8,0 .8-.8V4.600q0-.8-.8-.8H8.800L7.400,2Q6.800,1.300 6,1.300H2.200Q.6,1.300 .6,2.900V11.800q0,.8 .7,.8z" fill="#f5d868" stroke="#bc9430" stroke-width="1"/><path d="M2.600,5.400h11.400q.6,0 .6,.6V11.600q0,.6-.6,.6H2.600q-.6,0-.6-.6V6q0-.6 .6-.6z" fill="url(#fg)" stroke="#c8a23c" stroke-width=".8"/></svg>
<span class="t ty" style="left:106.19999999999999px;top:457px;letter-spacing:-0.445px">0.00 MB</span>
<span class="t ty" style="left:150.5px;top:457px;letter-spacing:-0.592px">slib20s</span>
<div class="hd" style="left:32px;top:479px;width:10px"></div>
<div class="ex" style="left:27px;top:475px"><i></i><b></b></div>
<svg class="ic" style="left:42px;top:472px" width="17" height="14" viewBox="0 0 17 14"><defs><linearGradient id="fg" x1="0" y1="0" x2="0" y2="1"><stop offset="0" stop-color="#fff8c0"/><stop offset="1" stop-color="#f0d058"/></linearGradient></defs><path d="M1.300,13.200h13.400q.8,0 .8-.8V5.200q0-.8-.8-.8H9.200L7.600,2.600Q7,1.900 6.200,1.900H2.400Q.8,1.900 .8,3.500V12.400q0,.8 .5,.8z" fill="#8a6a1a" opacity=".6" transform="translate(.8,.7)"/><path d="M1.300,12.600h12.800q.8,0 .8-.8V4.600q0-.8-.8-.8H8.800L7.400,2Q6.800,1.300 6,1.300H2.200Q.6,1.300 .6,2.900V11.800q0,.8 .7,.8z" fill="#f5d868" stroke="#bc9430" stroke-width="1"/><path d="M2.600,5.400h11.400q.6,0 .6,.6V11.600q0,.6-.6,.6H2.600q-.6,0-.6-.6V6q0-.6 .6-.6z" fill="url(#fg)" stroke="#c8a23c" stroke-width=".8"/></svg>
<span class="t ty" style="left:106.19999999999999px;top:473px;letter-spacing:-0.445px">0.00 MB</span>
<span class="t ty" style="left:150.5px;top:473px;letter-spacing:-0.558px">RECYCLER</span>
<div class="hd" style="left:32px;top:495px;width:10px"></div>
<svg class="ic" style="left:42px;top:488px" width="17" height="14" viewBox="0 0 17 14"><defs><linearGradient id="fg" x1="0" y1="0" x2="0" y2="1"><stop offset="0" stop-color="#fff8c0"/><stop offset="1" stop-color="#f0d058"/></linearGradient></defs><path d="M1.300,13.200h13.400q.8,0 .8-.8V5.200q0-.8-.8-.8H9.200L7.600,2.600Q7,1.900 6.200,1.900H2.400Q.8,1.900 .8,3.500V12.400q0,.8 .5,.8z" fill="#8a6a1a" opacity=".6" transform="translate(.8,.7)"/><path d="M1.300,12.600h12.800q.8,0 .8-.8V4.600q0-.8-.8-.8H8.800L7.400,2Q6.800,1.300 6,1.300H2.200Q.6,1.300 .6,2.900V11.800q0,.8 .7,.8z" fill="#f5d868" stroke="#bc9430" stroke-width="1"/><path d="M2.600,5.400h11.400q.6,0 .6,.6V11.600q0,.6-.6,.6H2.600q-.6,0-.6-.6V6q0-.6 .6-.6z" fill="url(#fg)" stroke="#c8a23c" stroke-width=".8"/></svg>
<span class="t ty" style="left:106.19999999999999px;top:489px;letter-spacing:-0.445px">0.00 MB</span>
<span class="t ty" style="left:150.5px;top:489px;letter-spacing:-0.477px">AETEM</span>
<div class="hd" style="left:32px;top:511px;width:10px"></div>
<div class="ex" style="left:27px;top:507px"><i></i></div>
<svg class="ic" style="left:42px;top:504px" width="17" height="14" viewBox="0 0 17 14"><defs><linearGradient id="fg" x1="0" y1="0" x2="0" y2="1"><stop offset="0" stop-color="#fff8c0"/><stop offset="1" stop-color="#f0d058"/></linearGradient></defs><path d="M1.300,13.200h13.400q.8,0 .8-.8V5.200q0-.8-.8-.8H9.200L7.600,2.600Q7,1.900 6.200,1.900H2.400Q.8,1.900 .8,3.500V12.400q0,.8 .5,.8z" fill="#8a6a1a" opacity=".6" transform="translate(.8,.7)"/><path d="M1.300,12.600h12.800q.8,0 .8-.8V4.600q0-.8-.8-.8H8.800L7.400,2Q6.800,1.300 6,1.300H2.200Q.6,1.300 .6,2.900V11.800q0,.8 .7,.8z" fill="#f5d868" stroke="#bc9430" stroke-width="1"/><path d="M2.600,5.400h11.400q.6,0 .6,.6V11.600q0,.6-.6,.6H2.600q-.6,0-.6-.6V6q0-.6 .6-.6z" fill="url(#fg)" stroke="#c8a23c" stroke-width=".8"/></svg>
<span class="t ty" style="left:106.19999999999999px;top:505px;letter-spacing:-0.445px">0.00 MB</span>
<span class="t ty" style="left:150.5px;top:505px;letter-spacing:-0.216px">DownloadedImages</span>
<div class="hd" style="left:51px;top:527px;width:10px"></div>
<svg class="ic" style="left:61px;top:520px" width="17" height="14" viewBox="0 0 17 14"><defs><linearGradient id="fg" x1="0" y1="0" x2="0" y2="1"><stop offset="0" stop-color="#fff8c0"/><stop offset="1" stop-color="#f0d058"/></linearGradient></defs><path d="M1.300,13.200h13.400q.8,0 .8-.8V5.200q0-.8-.8-.8H9.200L7.600,2.600Q7,1.900 6.200,1.900H2.400Q.8,1.900 .8,3.500V12.400q0,.8 .5,.8z" fill="#8a6a1a" opacity=".6" transform="translate(.8,.7)"/><path d="M1.300,12.600h12.800q.8,0 .8-.8V4.600q0-.8-.8-.8H8.800L7.400,2Q6.800,1.300 6,1.300H2.200Q.6,1.300 .6,2.900V11.800q0,.8 .7,.8z" fill="#f5d868" stroke="#bc9430" stroke-width="1"/><path d="M2.600,5.400h11.400q.6,0 .6,.6V11.600q0,.6-.6,.6H2.600q-.6,0-.6-.6V6q0-.6 .6-.6z" fill="url(#fg)" stroke="#c8a23c" stroke-width=".8"/></svg>
<span class="t ty" style="left:125.69999999999999px;top:521px;letter-spacing:-0.445px">0.00 MB</span>
<span class="t ty" style="left:169.5px;top:521px;letter-spacing:-0.534px">mypic</span>
<div class="hd" style="left:32px;top:543px;width:10px"></div>
<div class="ex" style="left:27px;top:539px"><i></i><b></b></div>
<svg class="ic" style="left:42px;top:536px" width="17" height="14" viewBox="0 0 17 14"><defs><linearGradient id="fg" x1="0" y1="0" x2="0" y2="1"><stop offset="0" stop-color="#fff8c0"/><stop offset="1" stop-color="#f0d058"/></linearGradient></defs><path d="M1.300,13.200h13.400q.8,0 .8-.8V5.200q0-.8-.8-.8H9.200L7.600,2.600Q7,1.900 6.200,1.900H2.400Q.8,1.900 .8,3.500V12.400q0,.8 .5,.8z" fill="#8a6a1a" opacity=".6" transform="translate(.8,.7)"/><path d="M1.300,12.600h12.800q.8,0 .8-.8V4.600q0-.8-.8-.8H8.800L7.400,2Q6.800,1.300 6,1.300H2.200Q.6,1.300 .6,2.900V11.800q0,.8 .7,.8z" fill="#f5d868" stroke="#bc9430" stroke-width="1"/><path d="M2.600,5.400h11.400q.6,0 .6,.6V11.600q0,.6-.6,.6H2.600q-.6,0-.6-.6V6q0-.6 .6-.6z" fill="url(#fg)" stroke="#c8a23c" stroke-width=".8"/></svg>
<span class="t ty" style="left:106.19999999999999px;top:537px;letter-spacing:-0.445px">0.00 MB</span>
<span class="t ty" style="left:150.5px;top:537px;letter-spacing:-0.199px">Intel</span>
<div class="hd" style="left:32px;top:559px;width:10px"></div>
<svg class="ic" style="left:42px;top:552px" width="17" height="14" viewBox="0 0 17 14"><defs><linearGradient id="fg" x1="0" y1="0" x2="0" y2="1"><stop offset="0" stop-color="#fff8c0"/><stop offset="1" stop-color="#f0d058"/></linearGradient></defs><path d="M1.300,13.200h13.400q.8,0 .8-.8V5.200q0-.8-.8-.8H9.200L7.600,2.600Q7,1.900 6.200,1.900H2.400Q.8,1.900 .8,3.500V12.400q0,.8 .5,.8z" fill="#8a6a1a" opacity=".6" transform="translate(.8,.7)"/><path d="M1.300,12.600h12.800q.8,0 .8-.8V4.600q0-.8-.8-.8H8.800L7.400,2Q6.800,1.300 6,1.300H2.200Q.6,1.300 .6,2.900V11.800q0,.8 .7,.8z" fill="#f5d868" stroke="#bc9430" stroke-width="1"/><path d="M2.600,5.400h11.400q.6,0 .6,.6V11.600q0,.6-.6,.6H2.600q-.6,0-.6-.6V6q0-.6 .6-.6z" fill="url(#fg)" stroke="#c8a23c" stroke-width=".8"/></svg>
<span class="t ty" style="left:106.19999999999999px;top:553px;letter-spacing:-0.445px">0.00 MB</span>
<span class="t ty" style="left:150.5px;top:553px;letter-spacing:-0.534px">mypic</span>
<div class="hd" style="left:32px;top:575px;width:10px"></div>
<svg class="ic" style="left:42px;top:568px" width="17" height="14" viewBox="0 0 17 14"><defs><linearGradient id="fg" x1="0" y1="0" x2="0" y2="1"><stop offset="0" stop-color="#fff8c0"/><stop offset="1" stop-color="#f0d058"/></linearGradient></defs><path d="M1.300,13.200h13.400q.8,0 .8-.8V5.200q0-.8-.8-.8H9.200L7.600,2.600Q7,1.900 6.200,1.900H2.400Q.8,1.900 .8,3.500V12.400q0,.8 .5,.8z" fill="#8a6a1a" opacity=".6" transform="translate(.8,.7)"/><path d="M1.300,12.600h12.800q.8,0 .8-.8V4.600q0-.8-.8-.8H8.800L7.400,2Q6.800,1.300 6,1.300H2.200Q.6,1.300 .6,2.900V11.800q0,.8 .7,.8z" fill="#f5d868" stroke="#bc9430" stroke-width="1"/><path d="M2.600,5.400h11.400q.6,0 .6,.6V11.600q0,.6-.6,.6H2.600q-.6,0-.6-.6V6q0-.6 .6-.6z" fill="url(#fg)" stroke="#c8a23c" stroke-width=".8"/></svg>
<span class="t ty" style="left:106.19999999999999px;top:569px;letter-spacing:-0.445px">0.00 MB</span>
<span class="t ty" style="left:150.5px;top:569px;letter-spacing:-0.313px">System Volume Information</span>
<span class="t ty" style="left:183px;top:89px;letter-spacing:-0.566px">l (C:)</span>
<span class="t ty" style="left:278px;top:233px;">l</span>
<div style="left:1px;top:706px;width:279px;height:11px;background:#d4d0c8;"></div>
<div style="left:1px;top:707px;width:279px;height:1px;background:#fff;"></div>
<div style="left:1px;top:707px;width:1px;height:10px;background:#fff;"></div>
<div style="left:15px;top:707px;width:1px;height:10px;background:#808080;"></div>
<div style="left:16px;top:707px;width:1px;height:10px;background:#404040;"></div>
<div class="arl" style="left:6px;top:709px"></div>
<div style="left:17px;top:707px;width:1px;height:10px;background:#fff;"></div>
<div style="left:258px;top:707px;width:1px;height:10px;background:#808080;"></div>
<div style="left:259px;top:707px;width:1px;height:10px;background:#404040;"></div>
<div style="left:260px;top:707px;width:4px;height:10px;background:#eae8e4;"></div>
<div style="left:264px;top:707px;width:1px;height:10px;background:#fff;"></div>
<div style="left:278px;top:707px;width:1px;height:10px;background:#808080;"></div>
<div style="left:279px;top:707px;width:1px;height:10px;background:#404040;"></div>
<div class="arr2" style="left:270px;top:709px"></div>
<div style="left:287px;top:85px;width:737px;height:1px;background:#808080;"></div>
<div style="left:288px;top:86px;width:736px;height:1px;background:#404040;"></div>
<div style="left:287px;top:85px;width:1px;height:632px;background:#808080;"></div>
<div style="left:288px;top:86px;width:1px;height:631px;background:#404040;"></div>
<div style="left:287px;top:715px;width:737px;height:1px;background:#d4d0c8;"></div>
<div style="left:287px;top:716px;width:737px;height:1px;background:#fff;"></div>
<div style="left:289px;top:87px;width:735px;height:628px;background:linear-gradient(#80ff80,#008000)"></div>
<svg class="ic" style="left:289px;top:87px;will-change:transform" width="735" height="628" viewBox="289 87 735 628" font-family="Liberation Sans, sans-serif" font-size="11"><g shape-rendering="crispEdges" stroke="#000" stroke-width="1" stroke-linejoin="round"><path d="M457.0,372.5 L457.0,375.4 L457.2,378.2 L457.4,381.1 L457.7,383.9 L458.0,386.7 L458.5,389.6 L459.0,392.4 L459.6,395.2 L460.3,398.0 L461.1,400.8 L461.9,403.6 L462.9,406.4 L463.9,409.2 L465.0,411.9 L466.2,414.7 L467.4,417.4 L468.7,420.1 L470.2,422.7 L471.6,425.4 L473.2,428.0 L474.8,430.6 L476.5,433.2 L476.5,448.2 L474.8,445.6 L473.2,443.0 L471.6,440.4 L470.2,437.7 L468.7,435.1 L467.4,432.4 L466.2,429.7 L465.0,426.9 L463.9,424.2 L462.9,421.4 L461.9,418.6 L461.1,415.8 L460.3,413.0 L459.6,410.2 L459.0,407.4 L458.5,404.6 L458.0,401.7 L457.7,398.9 L457.4,396.1 L457.2,393.2 L457.0,390.4 L457.0,387.5Z" fill="#006000"/><path d="M476.5,433.2 L478.3,435.8 L480.2,438.3 L482.1,440.8 L484.1,443.3 L486.1,445.7 L488.3,448.1 L490.5,450.5 L492.7,452.8 L495.1,455.2 L497.5,457.4 L499.9,459.7 L502.5,461.9 L505.1,464.1 L507.7,466.2 L510.4,468.3 L513.2,470.4 L516.0,472.4 L518.9,474.4 L521.9,476.3 L524.9,478.2 L527.9,480.0 L531.0,481.8 L534.2,483.6 L537.4,485.3 L540.7,487.0 L540.7,502.0 L537.4,500.3 L534.2,498.6 L531.0,496.8 L527.9,495.0 L524.9,493.2 L521.9,491.3 L518.9,489.4 L516.0,487.4 L513.2,485.4 L510.4,483.3 L507.7,481.2 L505.1,479.1 L502.5,476.9 L499.9,474.7 L497.5,472.4 L495.1,470.2 L492.7,467.8 L490.5,465.5 L488.3,463.1 L486.1,460.7 L484.1,458.3 L482.1,455.8 L480.2,453.3 L478.3,450.8 L476.5,448.2Z" fill="#dfdf00"/><path d="M540.7,487.0 L544.0,488.6 L547.4,490.2 L550.8,491.8 L554.3,493.3 L557.8,494.7 L561.4,496.1 L565.0,497.4 L568.6,498.7 L572.3,500.0 L576.0,501.1 L579.7,502.3 L583.5,503.3 L587.3,504.4 L591.2,505.3 L595.0,506.2 L598.9,507.1 L598.9,522.1 L595.0,521.2 L591.2,520.3 L587.3,519.4 L583.5,518.3 L579.7,517.3 L576.0,516.1 L572.3,515.0 L568.6,513.7 L565.0,512.4 L561.4,511.1 L557.8,509.7 L554.3,508.3 L550.8,506.8 L547.4,505.2 L544.0,503.6 L540.7,502.0Z" fill="#0000df"/><path d="M598.9,507.1 L602.8,507.9 L606.6,508.6 L610.5,509.3 L614.4,509.9 L618.3,510.5 L622.3,511.0 L626.2,511.4 L630.2,511.8 L634.1,512.1 L638.1,512.4 L642.1,512.7 L646.1,512.8 L650.1,512.9 L650.1,527.9 L646.1,527.8 L642.1,527.7 L638.1,527.4 L634.1,527.1 L630.2,526.8 L626.2,526.4 L622.3,526.0 L618.3,525.5 L614.4,524.9 L610.5,524.3 L606.6,523.6 L602.8,522.9 L598.9,522.1Z" fill="#dfdfdf"/><path d="M650.1,512.9 L654.1,513.0 L658.1,513.0 L662.1,512.9 L666.1,512.8 L670.0,512.7 L674.0,512.4 L678.0,512.1 L681.9,511.8 L685.9,511.4 L689.8,511.0 L693.8,510.4 L697.7,509.9 L701.6,509.3 L701.6,524.3 L697.7,524.9 L693.8,525.4 L689.8,526.0 L685.9,526.4 L681.9,526.8 L678.0,527.1 L674.0,527.4 L670.0,527.7 L666.1,527.8 L662.1,527.9 L658.1,528.0 L654.1,528.0 L650.1,527.9Z" fill="#606060"/><path d="M701.6,509.3 L705.7,508.5 L709.8,507.8 L713.9,506.9 L718.0,506.0 L722.1,505.0 L726.1,504.0 L730.1,502.9 L734.0,501.8 L737.9,500.5 L741.8,499.3 L741.8,514.3 L737.9,515.5 L734.0,516.8 L730.1,517.9 L726.1,519.0 L722.1,520.0 L718.0,521.0 L713.9,521.9 L709.8,522.8 L705.7,523.5 L701.6,524.3Z" fill="#df00df"/><path d="M741.8,499.3 L745.7,497.9 L749.6,496.5 L753.4,495.0 L757.1,493.5 L760.9,491.9 L764.5,490.3 L768.2,488.6 L771.7,486.8 L775.2,485.0 L775.2,500.0 L771.7,501.8 L768.2,503.6 L764.5,505.3 L760.9,506.9 L757.1,508.5 L753.4,510.0 L749.6,511.5 L745.7,512.9 L741.8,514.3Z" fill="#006060"/><path d="M775.2,485.0 L778.4,483.3 L781.6,481.5 L784.7,479.6 L787.8,477.8 L790.8,475.8 L793.8,473.9 L796.7,471.9 L799.5,469.8 L802.3,467.8 L802.3,482.8 L799.5,484.8 L796.7,486.9 L793.8,488.9 L790.8,490.8 L787.8,492.8 L784.7,494.6 L781.6,496.5 L778.4,498.3 L775.2,500.0Z" fill="#000060"/><path d="M802.3,467.8 L805.2,465.4 L808.1,463.1 L810.9,460.7 L813.6,458.2 L816.3,455.8 L818.9,453.2 L821.4,450.7 L823.8,448.1 L823.8,463.1 L821.4,465.7 L818.9,468.2 L816.3,470.8 L813.6,473.2 L810.9,475.7 L808.1,478.1 L805.2,480.4 L802.3,482.8Z" fill="#600000"/><path d="M823.8,448.1 L826.0,445.6 L828.1,443.1 L830.1,440.5 L832.1,437.9 L834.0,435.3 L835.8,432.7 L835.8,447.7 L834.0,450.3 L832.1,452.9 L830.1,455.5 L828.1,458.1 L826.0,460.6 L823.8,463.1Z" fill="#00df00"/><path d="M835.8,432.7 L837.8,429.7 L839.6,426.6 L841.4,423.6 L843.0,420.5 L844.6,417.3 L844.6,432.3 L843.0,435.5 L841.4,438.6 L839.6,441.6 L837.8,444.7 L835.8,447.7Z" fill="#606000"/><path d="M844.6,417.3 L846.0,414.2 L847.3,411.1 L848.5,408.0 L849.7,404.8 L850.7,401.7 L850.7,416.7 L849.7,419.8 L848.5,423.0 L847.3,426.1 L846.0,429.2 L844.6,432.3Z" fill="#600060"/><path d="M850.7,401.7 L851.5,398.6 L852.3,395.5 L853.0,392.4 L853.6,389.3 L854.1,386.2 L854.1,401.2 L853.6,404.3 L853.0,407.4 L852.3,410.5 L851.5,413.6 L850.7,416.7Z" fill="#a0a0a0"/><path d="M854.1,386.2 L854.5,382.8 L854.8,379.3 L854.9,375.9 L855.0,372.5 L855.0,387.5 L854.9,390.9 L854.8,394.3 L854.5,397.8 L854.1,401.2Z" fill="#00dfdf"/><path d="M656.0,372.5 L855.0,372.5 L855.0,369.7 L854.8,366.9 L854.6,364.1 L854.4,361.3 L854.0,358.4 L853.6,355.6 L853.0,352.9 L852.4,350.1 L851.8,347.3 L851.0,344.5 L850.2,341.8 L849.3,339.0 L848.3,336.3 L847.2,333.6 L846.1,330.9 L844.9,328.2 L843.6,325.6 L842.2,322.9 L840.8,320.3 L839.2,317.7 L837.6,315.1 L836.0,312.5 L834.2,310.0 L832.4,307.5 L830.5,305.0 L828.6,302.6 L826.6,300.1 L824.5,297.7 L822.3,295.4 L820.1,293.0 L817.8,290.7 L815.5,288.5 L813.1,286.2 L810.6,284.0 L808.0,281.8 L805.4,279.7 L802.8,277.6 L800.0,275.6 L797.3,273.5 L794.4,271.6 L791.5,269.6 L788.6,267.7 L785.6,265.9 L782.5,264.1 L779.4,262.3 L776.3,260.6 L773.1,258.9 L769.8,257.3 L766.5,255.7 L763.2,254.1 L759.8,252.6 L756.4,251.2 L752.9,249.8 L749.4,248.4 L745.9,247.2 L742.3,245.9 L738.7,244.7 L735.1,243.6 L731.4,242.5 L727.7,241.4 L723.9,240.4 L720.2,239.5 L716.4,238.6 L712.6,237.8 L708.8,237.0 L704.9,236.3 L701.0,235.6 L697.1,235.0 L693.2,234.5 L689.3,234.0 L685.4,233.5 L681.4,233.2 L677.5,232.8 L673.5,232.5 L669.5,232.3 L665.5,232.2 L661.5,232.1 L657.6,232.0 L653.6,232.0 L649.6,232.1 L645.6,232.2 L641.6,232.4 L637.6,232.6 L633.7,232.9 L629.7,233.2 L625.8,233.6 L621.8,234.1 L617.9,234.6 L614.0,235.2 L610.1,235.8 L606.2,236.5 L602.4,237.2 L598.6,238.0 L594.8,238.8 L591.0,239.7 L587.2,240.7 L583.5,241.7 L579.8,242.7 L576.1,243.8 L572.5,245.0 L568.9,246.2 L565.3,247.4 L561.8,248.7 L558.3,250.1 L554.8,251.5 L551.4,253.0 L548.1,254.5 L544.7,256.0 L541.5,257.6 L538.2,259.3 L535.0,260.9 L531.9,262.7 L528.8,264.5 L525.7,266.3 L522.8,268.1 L519.8,270.0 L516.9,272.0 L514.1,274.0 L511.4,276.0 L508.6,278.1 L506.0,280.2 L503.4,282.3 L500.9,284.5 L498.4,286.7 L496.0,289.0 L493.7,291.2 L491.4,293.5 L489.2,295.9 L487.0,298.3 L485.0,300.7 L483.0,303.1 L481.0,305.6 L479.2,308.1 L477.4,310.6 L475.7,313.1 L474.0,315.7 L472.4,318.3 L470.9,320.9 L469.5,323.5 L468.1,326.1 L466.9,328.8 L465.7,331.5Z" fill="#ff0000"/><path d="M656.0,372.5 L465.7,331.5 L464.5,334.2 L463.5,336.9 L462.5,339.7 L461.6,342.4 L460.8,345.2 L460.1,347.9 L459.4,350.7 L458.8,353.5 L458.3,356.3 L457.9,359.1 L457.6,361.9 L457.3,364.8 L457.1,367.6 L457.0,370.4 L457.0,373.2 L457.1,376.0 L457.2,378.9 L457.4,381.7 L457.7,384.5 L458.1,387.3 L458.6,390.1 L459.1,392.9 L459.7,395.7 L460.4,398.5 L461.2,401.2 L462.1,404.0 L463.0,406.7 L464.0,409.5 L465.1,412.2 L466.3,414.9 L467.5,417.6 L468.8,420.2 L470.2,422.9 L471.7,425.5 L473.2,428.1 L474.9,430.7 L476.5,433.2Z" fill="#008000"/><path d="M656.0,372.5 L476.5,433.2 L478.3,435.8 L480.2,438.3 L482.1,440.8 L484.1,443.3 L486.1,445.7 L488.3,448.1 L490.5,450.5 L492.7,452.8 L495.1,455.2 L497.5,457.4 L499.9,459.7 L502.5,461.9 L505.1,464.1 L507.7,466.2 L510.4,468.3 L513.2,470.4 L516.0,472.4 L518.9,474.4 L521.9,476.3 L524.9,478.2 L527.9,480.0 L531.0,481.8 L534.2,483.6 L537.4,485.3 L540.7,487.0Z" fill="#ffff00"/><path d="M656.0,372.5 L540.7,487.0 L544.0,488.6 L547.4,490.2 L550.8,491.8 L554.3,493.3 L557.8,494.7 L561.4,496.1 L565.0,497.4 L568.6,498.7 L572.3,500.0 L576.0,501.1 L579.7,502.3 L583.5,503.3 L587.3,504.4 L591.2,505.3 L595.0,506.2 L598.9,507.1Z" fill="#0000ff"/><path d="M656.0,372.5 L598.9,507.1 L602.8,507.9 L606.6,508.6 L610.5,509.3 L614.4,509.9 L618.3,510.5 L622.3,511.0 L626.2,511.4 L630.2,511.8 L634.1,512.1 L638.1,512.4 L642.1,512.7 L646.1,512.8 L650.1,512.9Z" fill="#ffffff"/><path d="M656.0,372.5 L650.1,512.9 L654.1,513.0 L658.1,513.0 L662.1,512.9 L666.1,512.8 L670.0,512.7 L674.0,512.4 L678.0,512.1 L681.9,511.8 L685.9,511.4 L689.8,511.0 L693.8,510.4 L697.7,509.9 L701.6,509.3Z" fill="#808080"/><path d="M656.0,372.5 L701.6,509.3 L705.7,508.5 L709.8,507.8 L713.9,506.9 L718.0,506.0 L722.1,505.0 L726.1,504.0 L730.1,502.9 L734.0,501.8 L737.9,500.5 L741.8,499.3Z" fill="#ff00ff"/><path d="M656.0,372.5 L741.8,499.3 L745.7,497.9 L749.6,496.5 L753.4,495.0 L757.1,493.5 L760.9,491.9 L764.5,490.3 L768.2,488.6 L771.7,486.8 L775.2,485.0Z" fill="#008080"/><path d="M656.0,372.5 L775.2,485.0 L778.4,483.3 L781.6,481.5 L784.7,479.6 L787.8,477.8 L790.8,475.8 L793.8,473.9 L796.7,471.9 L799.5,469.8 L802.3,467.8Z" fill="#000080"/><path d="M656.0,372.5 L802.3,467.8 L805.2,465.4 L808.1,463.1 L810.9,460.7 L813.6,458.2 L816.3,455.8 L818.9,453.2 L821.4,450.7 L823.8,448.1Z" fill="#800000"/><path d="M656.0,372.5 L823.8,448.1 L826.0,445.6 L828.1,443.1 L830.1,440.5 L832.1,437.9 L834.0,435.3 L835.8,432.7Z" fill="#00ff00"/><path d="M656.0,372.5 L835.8,432.7 L837.8,429.7 L839.6,426.6 L841.4,423.6 L843.0,420.5 L844.6,417.3Z" fill="#808000"/><path d="M656.0,372.5 L844.6,417.3 L846.0,414.2 L847.3,411.1 L848.5,408.0 L849.7,404.8 L850.7,401.7Z" fill="#800080"/><path d="M656.0,372.5 L850.7,401.7 L851.5,398.6 L852.3,395.5 L853.0,392.4 L853.6,389.3 L854.1,386.2Z" fill="#c0c0c0"/><path d="M656.0,372.5 L854.1,386.2 L854.5,382.8 L854.8,379.3 L854.9,375.9 L855.0,372.5Z" fill="#00ffff"/><path d="M685.4,233.5 L687.5,221.5" fill="none"/><path d="M457.6,383.1 L446.5,384.5" fill="none"/><path d="M503.8,463.0 L495.5,470.5" fill="none"/><path d="M568.6,498.7 L563.5,508.5" fill="none"/><path d="M624.2,511.2 L621.5,521.5" fill="none"/><path d="M676.0,512.3 L677.5,523.5" fill="none"/><path d="M722.1,505.0 L726.5,515.5" fill="none"/><path d="M759.0,492.7 L765.5,502.5" fill="none"/><path d="M789.3,476.8 L797.5,485.5" fill="none"/><path d="M813.6,458.2 L822.5,465.5" fill="none"/><path d="M830.1,440.5 L840.5,446.5" fill="none"/><path d="M840.5,425.1 L851.5,429.5" fill="none"/><path d="M848.0,409.6 L859.5,412.5" fill="none"/><path d="M852.7,393.9 L864.5,396.5" fill="none"/><path d="M854.8,379.3 L866.5,379.5" fill="none"/></g><g shape-rendering="crispEdges"><rect x="687.5" y="206.5" width="92" height="15" fill="#fffd92" stroke="#000"/><text x="691.5" y="218" letter-spacing="-.08">system32 45.3%</text><rect x="358.5" y="384.5" width="88" height="15" fill="#fffd92" stroke="#000"/><text x="362.5" y="396" letter-spacing="-.08">Installer 11.83%</text><rect x="400.5" y="470.5" width="95" height="15" fill="#fffd92" stroke="#000"/><text x="404.5" y="482" letter-spacing="-.08">Other (79) 8.05%</text><rect x="419.5" y="508.5" width="144" height="15" fill="#fffd92" stroke="#000"/><text x="423.5" y="520" letter-spacing="-.08">SoftwareDistribution 5.21%</text><rect x="533.5" y="521.5" width="88" height="15" fill="#fffd92" stroke="#000"/><text x="537.5" y="533" letter-spacing="-.08">$hf_mig$ 4.16%</text><rect x="677.5" y="523.5" width="111" height="15" fill="#fffd92" stroke="#000"/><text x="681.5" y="535" letter-spacing="-.08">Microsoft.NET 4.15%</text><rect x="726.5" y="515.5" width="108" height="15" fill="#fffd92" stroke="#000"/><text x="730.5" y="527" letter-spacing="-.08">Driver Cache 3.42%</text><rect x="765.5" y="502.5" width="91" height="15" fill="#fffd92" stroke="#000"/><text x="769.5" y="514" letter-spacing="-.08">assembly 3.13%</text><rect x="797.5" y="485.5" width="72" height="15" fill="#fffd92" stroke="#000"/><text x="801.5" y="497" letter-spacing="-.08">[Files] 2.92%</text><rect x="822.5" y="465.5" width="57" height="15" fill="#fffd92" stroke="#000"/><text x="826.5" y="477" letter-spacing="-.08">inf 2.82%</text><rect x="840.5" y="446.5" width="72" height="15" fill="#fffd92" stroke="#000"/><text x="844.5" y="458" letter-spacing="-.08">Fonts 1.99%</text><rect x="851.5" y="429.5" width="66" height="15" fill="#fffd92" stroke="#000"/><text x="855.5" y="441" letter-spacing="-.08">Help 1.88%</text><rect x="859.5" y="412.5" width="71" height="15" fill="#fffd92" stroke="#000"/><text x="863.5" y="424" letter-spacing="-.08">Temp 1.84%</text><rect x="864.5" y="396.5" width="98" height="15" fill="#fffd92" stroke="#000"/><text x="868.5" y="408" letter-spacing="-.08">ie7updates 1.78%</text><rect x="866.5" y="379.5" width="86" height="15" fill="#fffd92" stroke="#000"/><text x="870.5" y="391" letter-spacing="-.08">pchealth 1.55%</text></g><rect x="608.5" y="112.5" width="95" height="17" fill="#fff" stroke="#000" shape-rendering="crispEdges"/><text x="656" y="126" font-size="13" font-weight="bold" text-anchor="middle">C:\WINDOWS</text><g shape-rendering="crispEdges"><rect x="368" y="650" width="609" height="46" fill="#000"/><rect x="365.5" y="647.5" width="608" height="45" fill="#fff" stroke="#000"/><path d="M484.5,648 V692" stroke="#000"/><path d="M603.5,648 V692" stroke="#000"/><path d="M722.5,648 V692" stroke="#000"/><path d="M841.5,648 V692" stroke="#000"/></g><rect x="369.5" y="651.5" width="11" height="9" fill="#ff0000" stroke="#000" shape-rendering="crispEdges"/><text x="384.5" y="660" letter-spacing="-.12" clip-path="url(#c0)">system32</text><rect x="488.5" y="651.5" width="11" height="9" fill="#008000" stroke="#000" shape-rendering="crispEdges"/><text x="503.5" y="660" letter-spacing="-.12" clip-path="url(#c1)">Installer</text><rect x="607.5" y="651.5" width="11" height="9" fill="#ffff00" stroke="#000" shape-rendering="crispEdges"/><text x="622.5" y="660" letter-spacing="-.12" clip-path="url(#c2)">Other (79)</text><rect x="726.5" y="651.5" width="11" height="9" fill="#0000ff" stroke="#000" shape-rendering="crispEdges"/><text x="741.5" y="660" letter-spacing="-.12" clip-path="url(#c3)">SoftwareDistribution</text><rect x="845.5" y="651.5" width="11" height="9" fill="#ffffff" stroke="#000" shape-rendering="crispEdges"/><text x="860.5" y="660" letter-spacing="-.12" clip-path="url(#c4)">$hf_mig$</text><rect x="369.5" y="665.5" width="11" height="9" fill="#808080" stroke="#000" shape-rendering="crispEdges"/><text x="384.5" y="674" letter-spacing="-.12" clip-path="url(#c0)">Microsoft.NET</text><rect x="488.5" y="665.5" width="11" height="9" fill="#ff00ff" stroke="#000" shape-rendering="crispEdges"/><text x="503.5" y="674" letter-spacing="-.12" clip-path="url(#c1)">Driver Cache</text><rect x="607.5" y="665.5" width="11" height="9" fill="#008080" stroke="#000" shape-rendering="crispEdges"/><text x="622.5" y="674" letter-spacing="-.12" clip-path="url(#c2)">assembly</text><rect x="726.5" y="665.5" width="11" height="9" fill="#000080" stroke="#000" shape-rendering="crispEdges"/><text x="741.5" y="674" letter-spacing="-.12" clip-path="url(#c3)">[Files]</text><rect x="845.5" y="665.5" width="11" height="9" fill="#800000" stroke="#000" shape-rendering="crispEdges"/><text x="860.5" y="674" letter-spacing="-.12" clip-path="url(#c4)">inf</text><rect x="369.5" y="679.5" width="11" height="9" fill="#00ff00" stroke="#000" shape-rendering="crispEdges"/><text x="384.5" y="688" letter-spacing="-.12" clip-path="url(#c0)">Fonts</text><rect x="488.5" y="679.5" width="11" height="9" fill="#808000" stroke="#000" shape-rendering="crispEdges"/><text x="503.5" y="688" letter-spacing="-.12" clip-path="url(#c1)">Help</text><rect x="607.5" y="679.5" width="11" height="9" fill="#800080" stroke="#000" shape-rendering="crispEdges"/><text x="622.5" y="688" letter-spacing="-.12" clip-path="url(#c2)">Temp</text><rect x="726.5" y="679.5" width="11" height="9" fill="#c0c0c0" stroke="#000" shape-rendering="crispEdges"/><text x="741.5" y="688" letter-spacing="-.12" clip-path="url(#c3)">ie7updates</text><rect x="845.5" y="679.5" width="11" height="9" fill="#00ffff" stroke="#000" shape-rendering="crispEdges"/><text x="860.5" y="688" letter-spacing="-.12" clip-path="url(#c4)">pchealth</text><defs><clipPath id="c0"><rect x="366" y="648" width="118" height="44"/></clipPath><clipPath id="c1"><rect x="485" y="648" width="118" height="44"/></clipPath><clipPath id="c2"><rect x="604" y="648" width="118" height="44"/></clipPath><clipPath id="c3"><rect x="723" y="648" width="118" height="44"/></clipPath><clipPath id="c4"><rect x="842" y="648" width="131" height="44"/></clipPath></defs></svg>
<div style="left:773px;top:662px;width:241px;height:45px;background:rgba(78,178,244,.45)"></div>
<span class="wm" style="left:786px;top:670px">DOWNLOADS</span>
<svg class="ic" style="left:918px;top:666px" width="22" height="29" viewBox="0 0 22 29"><rect x="2" y="22.500" width="18" height="5.200" rx="2.500" fill="#f8b818"/><path d="M11,4.400V16" stroke="#f4e040" stroke-width="5.600" stroke-linecap="round"/><path d="M16.400,11.600L11,17" stroke="#2f94dc" stroke-width="5.400" stroke-linecap="round"/><path d="M5.600,11.600L11,17" stroke="#3cb04c" stroke-width="5.400" stroke-linecap="round"/><path d="M11,13.500V17" stroke="#2f9a40" stroke-width="4" stroke-linecap="round" opacity=".6"/></svg>
<span class="wm" style="left:942px;top:670px;transform:scaleX(.74)">.GURU</span>
</body></html>
